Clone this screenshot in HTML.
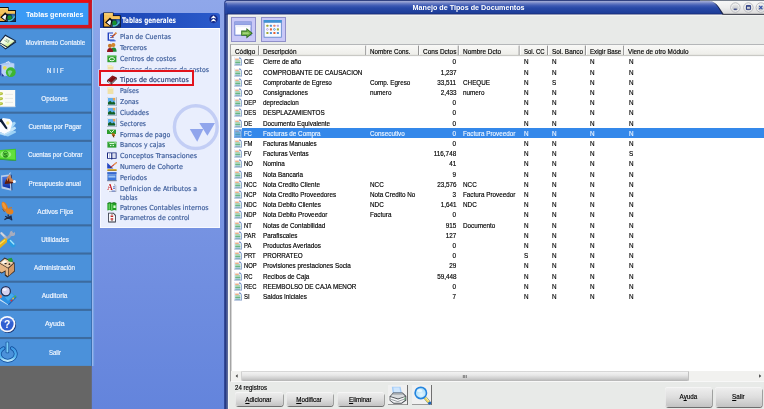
<!DOCTYPE html>
<html lang="es"><head><meta charset="utf-8"><title>Manejo de Tipos de Documentos</title>
<style>
html,body{margin:0;padding:0}
body{width:764px;height:409px;position:relative;overflow:hidden;font-family:"Liberation Sans",sans-serif;
background:linear-gradient(#8fa7ea 0%,#7d98e4 40%,#6384dc 100%)}
.a,.t,svg{position:absolute}
.t{white-space:nowrap;display:block;-webkit-text-stroke:0.18px currentColor}
.t u{text-decoration-thickness:0.6px;text-underline-offset:0.5px}
.sb{left:0;width:92px;background:#4a91da}
.sep{left:0;width:92px;height:2px;background:#3c6da3}
.btn{border-radius:3px;background:linear-gradient(#efefef,#dedede 50%,#c3c3c3);box-shadow:0.6px 1px 0.6px #6e6e6e,inset 0 0.8px 0 #f8f8f8,inset 0.8px 0 0 #ececec;}
.ib{background:#f0f0f0;box-shadow:1px 0 0 #707070,0 1px 0 #9a9a9a,1px 1px 0 #707070}
</style></head><body>

<svg style="left:0;top:0" width="96" height="409" viewBox="0 0 96 409"><rect x="0" y="0" width="91.8" height="366" fill="#4b91da"/><rect x="0" y="365.9" width="91.8" height="44" fill="#666666"/><rect x="91" y="28" width="1" height="337.9" fill="#3a72b4"/><rect x="92" y="0" width="1.4" height="366" fill="#a9c6f2" opacity="0.75"/><rect x="93.2" y="0" width="1" height="366" fill="#74aeea" opacity="0.6"/><rect x="0" y="27.12" width="91.8" height="2.1" fill="#3c6b9f"/><rect x="0" y="55.29" width="91.8" height="2.1" fill="#3c6b9f"/><rect x="0" y="83.46" width="91.8" height="2.1" fill="#3c6b9f"/><rect x="0" y="111.63" width="91.8" height="2.1" fill="#3c6b9f"/><rect x="0" y="139.80" width="91.8" height="2.1" fill="#3c6b9f"/><rect x="0" y="167.97" width="91.8" height="2.1" fill="#3c6b9f"/><rect x="0" y="196.14" width="91.8" height="2.1" fill="#3c6b9f"/><rect x="0" y="224.31" width="91.8" height="2.1" fill="#3c6b9f"/><rect x="0" y="252.48" width="91.8" height="2.1" fill="#3c6b9f"/><rect x="0" y="280.65" width="91.8" height="2.1" fill="#3c6b9f"/><rect x="0" y="308.82" width="91.8" height="2.1" fill="#3c6b9f"/><rect x="0" y="336.99" width="91.8" height="2.1" fill="#3c6b9f"/><rect x="0" y="0" width="92" height="28.1" fill="#3a9af5"/><rect x="0" y="0" width="92" height="2.7" fill="#f20a0c"/><rect x="88.4" y="0" width="3.5" height="28.1" fill="#cd1421"/><rect x="0" y="24.9" width="91.9" height="3.3" fill="#d0161f"/><rect x="0" y="1.6" width="88.4" height="1.1" fill="#e01018"/></svg>
<span class="t" style="left:23.04px;transform-origin:50% 0;top:10.25px;font-size:7.9px;line-height:9.48px;color:#ffffff;font-weight:bold;-webkit-text-stroke:0;transform:scaleX(0.904);">Tablas generales</span>
<svg style="left:0px;top:0px;filter:blur(0.35px);" width="24" height="28" viewBox="0 0 24 28"><g transform="translate(-1.6 6.7) scale(1.0)"><path d="M0 0.4 H10.3 V3.3 H17.5 V15.4 H0Z" fill="#0d0d10"/><path d="M0.9 1.3 H9.5 V4.2 H16.5 V14.4 H0.9Z" fill="#efb145"/><path d="M0.9 1.3 H9.5 V4.2 H16.5 V7.4 H0.9Z" fill="#f5c45e"/><path d="M0.9 1.3 H9.5 V2.5 H0.9Z" fill="#f9d47e"/><path d="M8.2 7.1 H16.9 V14.9 H8.2Z" fill="#132f5c"/><path d="M13 7.6 H16.5 V11.4 H14.2Z" fill="#2f6fae"/><path d="M9.6 13.9 Q13.6 15 16.1 9.6 Q15.1 13.2 9.6 13.9Z" fill="#4dbdcd" stroke="#4dbdcd" stroke-width="1.2"/><circle cx="11.2" cy="10.9" r="2.3" fill="#15902c"/><path d="M1.8 10.6 L6.8 5.6 L9.4 8.2 L7.8 15Z" fill="#0d0d10"/><path d="M3.5 10.6 L6.8 7.7 L7.9 8.9 L7 13.5Z" fill="#f6f6ff"/></g></svg>
<span class="t" style="left:22.59px;transform-origin:50% 0;top:38.71px;font-size:6.9px;line-height:8.28px;color:#f0f6ff;transform:scaleX(0.921);">Movimiento Contable</span>
<svg style="left:0px;top:28px;filter:blur(0.35px);" width="24" height="28" viewBox="0 28 24 28"><path d="M-1 44.2 L5.5 49.6 L16.3 42.3 L15.6 41.2Z" fill="#10223c"/><path d="M-0.5 44 L5.6 48.3 L14.8 42 Z" fill="#f4fbe9"/><path d="M-1.2 42.6 L5.2 34.6 L16.2 40.8 L7.6 47.9Z" fill="#10223c"/><path d="M0 42.5 L5.4 35.9 L14.8 41 L7.5 46.8Z" fill="url(#gmc)"/><defs><linearGradient id="gmc" x1="0.2" y1="0" x2="0.7" y2="1"><stop offset="0" stop-color="#ffffff"/><stop offset="0.55" stop-color="#f0fce6"/><stop offset="0.85" stop-color="#d4f08c"/><stop offset="1" stop-color="#c4ea2c"/></linearGradient></defs><path d="M4.3 40.2 L8.2 42.4 M5.6 38.8 L9.6 41 M7 40.2 L6 42 M9 40.6 L7.8 42.8" stroke="#8fae86" stroke-width="0.8" fill="none"/></svg>
<span class="t" style="left:45.61px;transform-origin:50% 0;top:66.89px;font-size:6.9px;line-height:8.28px;color:#f0f6ff;transform:scaleX(0.884);">N I I F</span>
<svg style="left:0px;top:56px;filter:blur(0.35px);" width="24" height="28" viewBox="0 56 24 28"><path d="M-1 64.5 L8 61.8 L14.4 63.4 L14.4 74 L4 76.6 L-1 75Z" fill="#a9c6f2"/><path d="M-1 64.5 L1.6 65.2 L1.6 76 L-1 75Z" fill="#3556c3"/><path d="M1.6 65.2 L13.8 63.8 L13.8 73 L1.6 76Z" fill="#bcd3f6"/><path d="M6 62.6 L9 61.6 L9.6 63.6" stroke="#d5e3fa" stroke-width="1" fill="none"/><circle cx="4.8" cy="67.8" r="1.9" fill="#eadb58"/><circle cx="10.8" cy="72.2" r="4.9" fill="#3eb62f"/><path d="M7.6 71.5 Q10 69 12.4 71.6 Q10.5 74.5 9.6 76.2 Q8 74 7.6 71.5Z" fill="#8fd3b8" opacity="0.75"/><path d="M1.6 73 L4.6 76.4 L1.6 76.2Z" fill="#23389a"/></svg>
<span class="t" style="left:40.42px;transform-origin:50% 0;top:95.05px;font-size:6.9px;line-height:8.28px;color:#f0f6ff;transform:scaleX(0.906);">Opciones</span>
<svg style="left:0px;top:84px;filter:blur(0.35px);" width="24" height="28" viewBox="0 84 24 28"><rect x="-1" y="90" width="16.2" height="17" fill="#fbfbf6"/><rect x="-1" y="106.2" width="16.4" height="1" fill="#c9d7e6"/><ellipse cx="0.6" cy="93.6" rx="2.5" ry="1.7" fill="#b3c341"/><ellipse cx="0.2" cy="93.1" rx="1.8" ry="0.8" fill="#d2dc77"/><ellipse cx="0.6" cy="98.6" rx="2.5" ry="1.7" fill="#b3c341"/><ellipse cx="0.2" cy="98.1" rx="1.8" ry="0.8" fill="#d2dc77"/><ellipse cx="0.6" cy="103.6" rx="2.5" ry="1.7" fill="#b3c341"/><ellipse cx="0.2" cy="103.1" rx="1.8" ry="0.8" fill="#d2dc77"/><path d="M5 94.4 H13" stroke="#dfe1dc" stroke-width="0.7"/><path d="M5 98.4 H13" stroke="#dfe1dc" stroke-width="0.7"/><path d="M5 102.4 H13" stroke="#dfe1dc" stroke-width="0.7"/></svg>
<span class="t" style="left:26.04px;transform-origin:50% 0;top:123.23px;font-size:6.9px;line-height:8.28px;color:#f0f6ff;transform:scaleX(0.913);">Cuentas por Pagar</span>
<svg style="left:0px;top:112px;filter:blur(0.35px);" width="24" height="28" viewBox="0 112 24 28"><path d="M3 132 L14 121.5 L16 123 L8 134.5Z" fill="#a9d9f8"/><path d="M2 132.5 L15 126.4 L16.2 128.4 L7 135.4Z" fill="#c5e6fa"/><path d="M0 133 L15.5 130.8 L16 132.6 L8 136.4 L0 134.6Z" fill="#9dd2f5"/><path d="M-1 122 L3 118 L10 119 L12.5 122.5 L10 131 L4.5 134 L-1 131.5Z" fill="#fbfdff"/><path d="M-1 131.5 L4.5 134 L10 131 L10.4 132.4 L4.5 135.4 L-1 133Z" fill="#c1e1f7"/><circle cx="7.8" cy="123" r="1.7" fill="#f6ec8c"/><path d="M-1 120 L1.4 118.6 L7 127.2 L7.4 129.4 L5.4 128.4Z" fill="#0d1e37"/></svg>
<span class="t" style="left:24.70px;transform-origin:50% 0;top:151.40px;font-size:6.9px;line-height:8.28px;color:#f0f6ff;transform:scaleX(0.903);">Cuentas por Cobrar</span>
<svg style="left:0px;top:140px;filter:blur(0.35px);" width="24" height="28" viewBox="0 140 24 28"><path d="M-1 150 L15.8 148.8 L16.1 160.4 L-1 158.8Z" fill="#3fc426"/><path d="M-1 150.9 L14.9 149.8 L15.2 159.4 L-1 158Z" fill="#62e03e"/><path d="M-1 158.8 L16.1 160.4 L16.1 161.1 L-1 159.6Z" fill="#2a9a1c"/><ellipse cx="5.8" cy="154.4" rx="5.4" ry="3.4" fill="#98f07c"/><ellipse cx="5.6" cy="154.4" rx="2.6" ry="3.2" fill="#66dc48" stroke="#23801a" stroke-width="0.7"/><text x="5.6" y="156.6" font-size="6.2" font-weight="bold" font-family="Liberation Sans, sans-serif" text-anchor="middle" fill="#1b7414">$</text></svg>
<span class="t" style="left:26.23px;transform-origin:50% 0;top:179.57px;font-size:6.9px;line-height:8.28px;color:#f0f6ff;transform:scaleX(0.914);">Presupuesto anual</span>
<svg style="left:0px;top:168px;filter:blur(0.35px);" width="24" height="28" viewBox="0 168 24 28"><path d="M1 175.4 L10.6 174.2 L11.6 190.8 L1.6 188.4Z" fill="#b9cdeb"/><path d="M10.6 174.2 L11.7 175 L12.4 190 L11.6 190.8Z" fill="#23366d"/><path d="M2.2 177 L9.4 176.2 L10.2 188.4 L2.6 186.6Z" fill="url(#gpa)"/><defs><linearGradient id="gpa" x1="0" y1="0" x2="0" y2="1"><stop offset="0" stop-color="#4a78e0"/><stop offset="1" stop-color="#0c2da0"/></linearGradient></defs><path d="M5 182.6 Q7 176.2 9.8 174.4 Q11 178.6 13.6 180.4 L13.4 182.6 L5.4 183.2Z" fill="#d08450"/><path d="M4.6 183.6 L6.4 178.8 L7.4 181.4 L9 177.4 L9.4 181.6 L13 182 L12.8 183.2 L5 184Z" fill="#5e1c0d"/><circle cx="14.4" cy="181.4" r="1.5" fill="#f3f5ff"/><path d="M9.6 174 L10.3 172.6" stroke="#dfe8f8" stroke-width="0.9"/></svg>
<span class="t" style="left:35.64px;transform-origin:50% 0;top:207.74px;font-size:6.9px;line-height:8.28px;color:#f0f6ff;transform:scaleX(0.930);">Activos Fijos</span>
<svg style="left:0px;top:196px;filter:blur(0.35px);" width="24" height="28" viewBox="0 196 24 28"><ellipse cx="4.8" cy="206.6" rx="2.6" ry="5.3" transform="rotate(-24 4.8 206.6)" fill="#df7d1d"/><ellipse cx="4.2" cy="205.8" rx="1.4" ry="3.6" transform="rotate(-24 4.2 205.8)" fill="#f09a3c"/><path d="M2.4 208.8 L4.6 212" stroke="#9a4d10" stroke-width="0.8"/><ellipse cx="9.6" cy="211.4" rx="3.9" ry="2.9" transform="rotate(18 9.6 211.4)" fill="#e4821f"/><path d="M8.8 208.2 L12 207.6" stroke="#d8731a" stroke-width="1"/><path d="M8.2 214.4 L8.2 216.4 M4.4 219.6 L11.6 215.8 M5.2 216.2 L11.8 219.8 M11 216.4 L11.8 220.4" stroke="#1c2b4c" stroke-width="1.3" fill="none"/></svg>
<span class="t" style="left:39.85px;transform-origin:50% 0;top:235.91px;font-size:6.9px;line-height:8.28px;color:#f0f6ff;transform:scaleX(0.914);">Utilidades</span>
<svg style="left:0px;top:224px;filter:blur(0.35px);" width="24" height="28" viewBox="0 224 24 28"><path d="M1.6 233.4 L7.4 239.2" stroke="#b4bccc" stroke-width="2.5" stroke-linecap="round"/><path d="M1.2 233 L4 235.8" stroke="#d3d8e4" stroke-width="1.4" stroke-linecap="round"/><path d="M12.4 232.8 L7 239" stroke="#9aa1b4" stroke-width="2.7"/><circle cx="12.4" cy="233.4" r="2.7" fill="#a6acbe"/><path d="M11.6 230.4 L13.2 233 L15.6 231.6" fill="#4a91da"/><path d="M5.4 240.6 L-1 246" stroke="#e4b01a" stroke-width="4.6" stroke-linecap="round"/><path d="M4.6 240.2 L-0.6 244.4" stroke="#fbdf5c" stroke-width="1.3" stroke-linecap="round"/><path d="M9.4 241 L13 245" stroke="#2a9ce2" stroke-width="4.8" stroke-linecap="round"/><path d="M10.4 240.4 L13.8 244" stroke="#a4e2fc" stroke-width="1.4" stroke-linecap="round"/></svg>
<span class="t" style="left:32.37px;transform-origin:50% 0;top:264.08px;font-size:6.9px;line-height:8.28px;color:#f0f6ff;transform:scaleX(0.906);">Administración</span>
<svg style="left:0px;top:252px;filter:blur(0.35px);" width="24" height="28" viewBox="0 252 24 28"><path d="M-1 262.6 L4.6 257.6 L14.6 262.4 L14.8 271.6 L7.4 277.6 L4.8 275.4 L4.8 271.8 L1.6 273.6 L-1 272Z" fill="#3a2c24"/><path d="M-0.4 262.8 L4.8 258.8 L13.6 262.8 L8 267.8Z" fill="#edcdaa"/><path d="M-0.4 263.6 L8 268.6 L8 276.2 L5.6 274.6 L5.6 270.2 L1.8 272.4 L-0.4 271.2Z" fill="#e5b687"/><path d="M8.6 268.4 L14 263.6 L14 271 L8.6 276Z" fill="#d59a66"/><path d="M1.2 262.6 L4.6 260 L7.2 261.4 L3.8 264Z" fill="#fbf6ee"/><path d="M7.6 258.8 L11.6 257.8 L13 260.4 L12 262 L8.6 261.6Z" fill="#279a3d"/><ellipse cx="5.6" cy="263.6" rx="1.3" ry="0.7" fill="#1a1a1a"/><circle cx="9.4" cy="264.2" r="0.9" fill="#3a2a22"/></svg>
<span class="t" style="left:41.38px;transform-origin:50% 0;top:292.25px;font-size:6.9px;line-height:8.28px;color:#f0f6ff;transform:scaleX(0.947);">Auditoria</span>
<svg style="left:0px;top:280px;filter:blur(0.35px);" width="24" height="28" viewBox="0 280 24 28"><path d="M-1 298.4 L10.8 292.4 L16.2 296.2 L8 304.4 Z" fill="#2b8fe2"/><path d="M-1 298.4 L8 304.4 L8.6 305.4 L-1 299.8Z" fill="#cfe6fa"/><path d="M8 304.4 L16.2 296.2 L16.4 297.4 L8.6 305.4Z" fill="#1d5fb3"/><path d="M4 296 L11 293 L14 295.6 L8 301Z" fill="#4db0f0" opacity="0.8"/><circle cx="15.2" cy="296.4" r="1" fill="#48b848"/><circle cx="13.2" cy="298.6" r="1" fill="#e8c030"/><circle cx="11.4" cy="300.6" r="1" fill="#d83838"/><circle cx="0" cy="296.4" r="1.9" fill="#ee8456"/><circle cx="5.8" cy="291.2" r="4.6" fill="#d3d1f0" stroke="#1f2f57" stroke-width="1.2"/><ellipse cx="4.6" cy="289.6" rx="2" ry="1.4" fill="#f4f3ff"/></svg>
<span class="t" style="left:45.28px;transform-origin:50% 0;top:320.42px;font-size:6.9px;line-height:8.28px;color:#f0f6ff;transform:scaleX(1.008);">Ayuda</span>
<svg style="left:0px;top:308px;filter:blur(0.35px);" width="24" height="28" viewBox="0 308 24 28"><circle cx="8" cy="325" r="8" fill="#17306e"/><circle cx="7.2" cy="324.1" r="8.2" fill="#fbfcff"/><circle cx="7.2" cy="324.1" r="6.4" fill="#3160d2"/><path d="M1.4 321.4 A6.4 6.4 0 0 1 13 321.6 Q7 323.6 1.4 321.4Z" fill="#5f88e6" opacity="0.55"/><text x="7.2" y="328" font-size="10.4" font-weight="bold" font-family="Liberation Sans, sans-serif" text-anchor="middle" fill="#ffffff">?</text></svg>
<span class="t" style="left:48.10px;transform-origin:50% 0;top:348.59px;font-size:6.9px;line-height:8.28px;color:#f0f6ff;transform:scaleX(0.869);">Salir</span>
<svg style="left:0px;top:336px;filter:blur(0.35px);" width="24" height="28" viewBox="0 336 24 28"><path d="M3.5 348.2 A8 6.8 0 1 0 11.9 348.2" fill="none" stroke="#0f4c9a" stroke-width="3.8" stroke-linecap="round"/><path d="M3.5 348.2 A8 6.8 0 1 0 11.9 348.2" fill="none" stroke="url(#gsa)" stroke-width="2.3" stroke-linecap="round"/><defs><linearGradient id="gsa" x1="0" y1="0" x2="0" y2="1"><stop offset="0" stop-color="#3f98e4"/><stop offset="0.7" stop-color="#55b6f0"/><stop offset="1" stop-color="#c4ecfc"/></linearGradient></defs><rect x="5.7" y="341.8" width="3.4" height="11.4" rx="0.8" fill="#0f4c9a"/><rect x="6.4" y="342.3" width="2" height="10.2" fill="#78ccf8"/></svg>
<div class="a" style="left:100px;top:13px;width:120px;height:15px;border-radius:3px 3px 0 0;background:linear-gradient(90deg,#1a43b2,#2b5bcb)"></div>
<div class="a" style="left:100px;top:28px;width:120px;height:200px;background:#e9eefd;box-sizing:border-box;border:1px solid #f7f9ff;border-top:1px solid #ffffff"></div>
<svg style="left:170px;top:102px;filter:blur(0.45px);" width="52" height="52" viewBox="170 102 52 52"><circle cx="195.8" cy="127.1" r="21.4" fill="none" stroke="#c3cef5" stroke-width="3.4"/><path d="M189.8 129 L203.4 129 L197.2 141.8Z" fill="#90a5ec"/><path d="M199.3 123 L215 123 L207.4 135.8Z" fill="#90a5ec"/></svg>
<svg style="left:100px;top:10px;filter:blur(0.3px);" width="124" height="20" viewBox="100 10 124 20"><g transform="translate(103.2 12.0) scale(1.0)"><path d="M0 0.4 H10.3 V3.3 H17.5 V15.4 H0Z" fill="#0d0d10"/><path d="M0.9 1.3 H9.5 V4.2 H16.5 V14.4 H0.9Z" fill="#efb145"/><path d="M0.9 1.3 H9.5 V4.2 H16.5 V7.4 H0.9Z" fill="#f5c45e"/><path d="M0.9 1.3 H9.5 V2.5 H0.9Z" fill="#f9d47e"/><path d="M8.2 7.1 H16.9 V14.9 H8.2Z" fill="#132f5c"/><path d="M13 7.6 H16.5 V11.4 H14.2Z" fill="#2f6fae"/><path d="M9.6 13.9 Q13.6 15 16.1 9.6 Q15.1 13.2 9.6 13.9Z" fill="#4dbdcd" stroke="#4dbdcd" stroke-width="1.2"/><circle cx="11.2" cy="10.9" r="2.3" fill="#15902c"/><path d="M1.8 10.6 L6.8 5.6 L9.4 8.2 L7.8 15Z" fill="#0d0d10"/><path d="M3.5 10.6 L6.8 7.7 L7.9 8.9 L7 13.5Z" fill="#f6f6ff"/></g><circle cx="213.5" cy="18.9" r="4.5" fill="#12298a" stroke="#3a62cc" stroke-width="0.6"/><path d="M211.4 18.3 L213.5 16.3 L215.6 18.3 M211.4 21.3 L213.5 19.3 L215.6 21.3" stroke="#fff" stroke-width="1.1" fill="none"/></svg>
<span class="t" style="left:121.60px;transform-origin:0 0;top:16.46px;font-size:7.9px;line-height:9.48px;color:#ffffff;font-weight:bold;-webkit-text-stroke:0;transform:scaleX(0.803);font-family:'DejaVu Sans Condensed','DejaVu Sans',sans-serif;">Tablas generales</span>
<span class="t" style="left:120.10px;transform-origin:0 0;top:33.42px;font-size:6.8px;line-height:8.16px;color:#3f5f9c;transform:scaleX(1.027);font-family:'DejaVu Sans Condensed','DejaVu Sans',sans-serif;">Plan de Cuentas</span>
<svg style="left:106px;top:30.1px;filter:blur(0.3px);" width="13" height="13" viewBox="106 30.1 13 13"><path transform="translate(107 32.10)" d="M0.6 0.4 H6 V1.4 H2 V7.6 H7.4 V8.8 H0.6Z" fill="#2140bd" /><path transform="translate(107 32.10)" d="M3 3.2 H6.4 V4 H3Z M3 5.2 H6.8 V6 H3Z" fill="#3050c8" /><path transform="translate(107 32.10)" d="M8.8 0.2 L9.8 1.2 L5.6 5.6 L4.2 6 L4.6 4.6Z" fill="#b84a28" /><path transform="translate(107 32.10)" d="M8.8 0.2 L9.8 1.2 L8.8 2.2 L7.8 1.2Z" fill="#e8a040" /><path transform="translate(107 32.10)" d="M3 8.2 H8.6 V9.4 H3Z" fill="#3f63d8" /></svg>
<span class="t" style="left:120.10px;transform-origin:0 0;top:44.02px;font-size:6.8px;line-height:8.16px;color:#3f5f9c;transform:scaleX(1.074);font-family:'DejaVu Sans Condensed','DejaVu Sans',sans-serif;">Terceros</span>
<svg style="left:106px;top:40.7px;filter:blur(0.3px);" width="13" height="13" viewBox="106 40.7 13 13"><path transform="translate(107 42.70)" d="M5.6 0 A2 2 0 1 1 5.5 4 Z" fill="#d88a30" /><circle cx="113.4" cy="44.699999999999996" r="2" fill="#d4862c"/><path transform="translate(107 42.70)" d="M3.6 8.8 Q3.8 4.4 6.6 4.4 Q9.6 4.4 9.6 8.8Z" fill="#1f8a36" /><circle cx="110" cy="45.49999999999999" r="2.1" fill="#c8782a"/><path transform="translate(107 42.70)" d="M0 9 Q0.2 5 3 5 Q6 5 6 9Z" fill="#93131f" /></svg>
<span class="t" style="left:120.10px;transform-origin:0 0;top:54.82px;font-size:6.8px;line-height:8.16px;color:#3f5f9c;transform:scaleX(1.023);font-family:'DejaVu Sans Condensed','DejaVu Sans',sans-serif;">Centros de costos</span>
<svg style="left:106px;top:51.5px;filter:blur(0.3px);" width="13" height="13" viewBox="106 51.5 13 13"><path transform="translate(107 53.50)" d="M0.4 1.6 H9.4 V8.2 H0.4Z" fill="#2f9f30" /><path transform="translate(107 53.50)" d="M0.4 1.6 H9.4 V2.8 H0.4Z" fill="#56bd52" /><ellipse cx="111.9" cy="58.7" rx="2.6" ry="1.6" fill="none" stroke="#f0fff0" stroke-width="1"/></svg>
<span class="t" style="left:120.10px;transform-origin:0 0;top:65.62px;font-size:6.8px;line-height:8.16px;color:#3f5f9c;transform:scaleX(1.019);font-family:'DejaVu Sans Condensed','DejaVu Sans',sans-serif;">Grupos de centros de costos</span>
<svg style="left:106px;top:62.3px;filter:blur(0.3px);" width="13" height="13" viewBox="106 62.3 13 13"><path transform="translate(107 64.30)" d="M0.6 1 H4.4 L5.2 2 H6.4 V8 H0.6Z" fill="#efdf9f" opacity="0.9"/><path transform="translate(107 64.30)" d="M0.6 1 H4.4 L5.2 2 H6.4 V3 H0.6Z" fill="#f6ecc0" /></svg>
<span class="t" style="left:120.10px;transform-origin:0 0;top:87.32px;font-size:6.8px;line-height:8.16px;color:#3f5f9c;transform:scaleX(0.991);font-family:'DejaVu Sans Condensed','DejaVu Sans',sans-serif;">Países</span>
<svg style="left:106px;top:84.0px;filter:blur(0.3px);" width="13" height="13" viewBox="106 84.0 13 13"><path transform="translate(107 86.00)" d="M0.6 1 H4.4 L5.2 2 H6.4 V8 H0.6Z" fill="#efdf9f" opacity="0.9"/><path transform="translate(107 86.00)" d="M0.6 1 H4.4 L5.2 2 H6.4 V3 H0.6Z" fill="#f6ecc0" /></svg>
<span class="t" style="left:120.10px;transform-origin:0 0;top:97.92px;font-size:6.8px;line-height:8.16px;color:#3f5f9c;transform:scaleX(1.003);font-family:'DejaVu Sans Condensed','DejaVu Sans',sans-serif;">Zonas</span>
<svg style="left:106px;top:94.6px;filter:blur(0.3px);" width="13" height="13" viewBox="106 94.6 13 13"><path transform="translate(107 96.60)" d="M0.2 0.2 H9.6 V9 H0.2Z" fill="#8a96a8" /><path transform="translate(107 96.60)" d="M0.2 0.2 H9 V8.4 H0.2Z" fill="#f4f6f8" /><path transform="translate(107 96.60)" d="M1 1 H8.2 V7.6 H1Z" fill="#5fb0f0" /><path transform="translate(107 96.60)" d="M5.6 1 H8.2 V3.6 H6.4Z" fill="#e8a050" /><path transform="translate(107 96.60)" d="M1 5.6 L3.2 3.8 L5 5.4 L6.6 4.4 L8.2 6 V7.6 H1Z" fill="#145f24" /></svg>
<span class="t" style="left:120.10px;transform-origin:0 0;top:108.72px;font-size:6.8px;line-height:8.16px;color:#3f5f9c;transform:scaleX(1.024);font-family:'DejaVu Sans Condensed','DejaVu Sans',sans-serif;">Ciudades</span>
<svg style="left:106px;top:105.4px;filter:blur(0.3px);" width="13" height="13" viewBox="106 105.4 13 13"><path transform="translate(107 107.40)" d="M0.2 0.2 H9.6 V9 H0.2Z" fill="#8a96a8" /><path transform="translate(107 107.40)" d="M0.2 0.2 H9 V8.4 H0.2Z" fill="#f4f6f8" /><path transform="translate(107 107.40)" d="M1 1 H8.2 V7.6 H1Z" fill="#5fb0f0" /><path transform="translate(107 107.40)" d="M5.6 1 H8.2 V3.6 H6.4Z" fill="#e8a050" /><path transform="translate(107 107.40)" d="M1 5.6 L3.2 3.8 L5 5.4 L6.6 4.4 L8.2 6 V7.6 H1Z" fill="#145f24" /></svg>
<span class="t" style="left:120.10px;transform-origin:0 0;top:119.62px;font-size:6.8px;line-height:8.16px;color:#3f5f9c;transform:scaleX(0.982);font-family:'DejaVu Sans Condensed','DejaVu Sans',sans-serif;">Sectores</span>
<svg style="left:106px;top:116.3px;filter:blur(0.3px);" width="13" height="13" viewBox="106 116.3 13 13"><path transform="translate(107 118.30)" d="M0.2 0.2 H9.6 V9 H0.2Z" fill="#8a96a8" /><path transform="translate(107 118.30)" d="M0.2 0.2 H9 V8.4 H0.2Z" fill="#f4f6f8" /><path transform="translate(107 118.30)" d="M1 1 H8.2 V7.6 H1Z" fill="#5fb0f0" /><path transform="translate(107 118.30)" d="M5.6 1 H8.2 V3.6 H6.4Z" fill="#e8a050" /><path transform="translate(107 118.30)" d="M1 5.6 L3.2 3.8 L5 5.4 L6.6 4.4 L8.2 6 V7.6 H1Z" fill="#145f24" /></svg>
<span class="t" style="left:120.10px;transform-origin:0 0;top:130.52px;font-size:6.8px;line-height:8.16px;color:#3f5f9c;transform:scaleX(1.028);font-family:'DejaVu Sans Condensed','DejaVu Sans',sans-serif;">Formas de pago</span>
<svg style="left:106px;top:127.19999999999999px;filter:blur(0.3px);" width="13" height="13" viewBox="106 127.19999999999999 13 13"><path transform="translate(107 129.20)" d="M0 0.6 H9 V5 H0Z" fill="#2e9d2e" /><path transform="translate(107 129.20)" d="M2.4 1.4 L4.4 3.6 L6.8 1.2" fill="none" stroke="#e6ffe0" stroke-width="1"/><path transform="translate(107 129.20)" d="M4.4 4.6 L7.2 4 L8.2 6.4 L6.4 8.2 L5.2 6.6Z" fill="#b8681c" /><path transform="translate(107 129.20)" d="M6 6 L6.8 8.4" fill="none" stroke="#5a2a08" stroke-width="0.9"/></svg>
<span class="t" style="left:120.10px;transform-origin:0 0;top:141.32px;font-size:6.8px;line-height:8.16px;color:#3f5f9c;transform:scaleX(0.996);font-family:'DejaVu Sans Condensed','DejaVu Sans',sans-serif;">Bancos y cajas</span>
<svg style="left:106px;top:138.0px;filter:blur(0.3px);" width="13" height="13" viewBox="106 138.0 13 13"><path transform="translate(107 140.00)" d="M0.4 1.8 H9.4 V7.6 H0.4Z" fill="#2fa032" /><path transform="translate(107 140.00)" d="M0.4 1.8 H9.4 V2.8 H0.4Z" fill="#5cc05a" /><path transform="translate(107 140.00)" d="M2.4 3.6 H7.4 M3 5.6 H4.4 M5.6 5.6 H7" fill="none" stroke="#eaffea" stroke-width="1"/><path transform="translate(107 140.00)" d="M7.6 2.4 L9 3.4" fill="none" stroke="#eaffea" stroke-width="0.8"/></svg>
<span class="t" style="left:120.10px;transform-origin:0 0;top:152.12px;font-size:6.8px;line-height:8.16px;color:#3f5f9c;transform:scaleX(1.046);font-family:'DejaVu Sans Condensed','DejaVu Sans',sans-serif;">Conceptos Transaciones</span>
<svg style="left:106px;top:148.8px;filter:blur(0.3px);" width="13" height="13" viewBox="106 148.8 13 13"><path transform="translate(107 150.80)" d="M0 1.4 H9.6 V7.8 H5.6 L4.8 8.8 L4 7.8 H0Z" fill="#17277e" /><path transform="translate(107 150.80)" d="M1 2.2 H4.2 V7 H1Z M5.4 2.2 H8.6 V7 H5.4Z" fill="#ffffff" /><path transform="translate(107 150.80)" d="M2.6 2.2 V7 M7 2.2 V7" fill="none" stroke="#8090c8" stroke-width="0.6"/></svg>
<span class="t" style="left:120.10px;transform-origin:0 0;top:162.82px;font-size:6.8px;line-height:8.16px;color:#3f5f9c;transform:scaleX(1.048);font-family:'DejaVu Sans Condensed','DejaVu Sans',sans-serif;">Numero de Cohorte</span>
<svg style="left:106px;top:159.5px;filter:blur(0.3px);" width="13" height="13" viewBox="106 159.5 13 13"><path transform="translate(107 161.50)" d="M0.2 0.8 L0.2 6.4 L6.4 6.4Z" fill="#2648c0" /><path transform="translate(107 161.50)" d="M9.4 0 L10 0.8 L4.4 5.6 L3.2 6 L3.6 4.8Z" fill="#c83828" /><path transform="translate(107 161.50)" d="M6.8 2.2 L7.6 3 L9.8 1 L9.2 0.2Z" fill="#f0a848" /><path transform="translate(107 161.50)" d="M3.2 6 L3.6 4.8 L4.4 5.6Z" fill="#202020" /><path transform="translate(107 161.50)" d="M0.4 7 H9.6 V8.8 H0.4Z" fill="#d9b233" /><path transform="translate(107 161.50)" d="M0.4 8.4 H9.6 V9 H0.4Z" fill="#8a6a18" /></svg>
<span class="t" style="left:120.10px;transform-origin:0 0;top:173.72px;font-size:6.8px;line-height:8.16px;color:#3f5f9c;transform:scaleX(1.039);font-family:'DejaVu Sans Condensed','DejaVu Sans',sans-serif;">Periodos</span>
<svg style="left:106px;top:170.4px;filter:blur(0.3px);" width="13" height="13" viewBox="106 170.4 13 13"><path transform="translate(107 172.40)" d="M0.2 0 H9.6 V9 H0.2Z" fill="#8ea8d8" /><path transform="translate(107 172.40)" d="M0.4 0.2 H9.4 V2 H0.4Z" fill="#3568d0" /><path transform="translate(107 172.40)" d="M0.8 2.6 H9 V8.2 H0.8Z" fill="#3d78dc" /><path transform="translate(107 172.40)" d="M1.4 3.6 H8.4 V5.6 H1.4Z" fill="#9cc4f4" /><path transform="translate(107 172.40)" d="M0.2 8.2 H9.6 V9.2 H0.2Z" fill="#6a7a98" /></svg>
<span class="t" style="left:120.10px;transform-origin:0 0;top:184.72px;font-size:6.8px;line-height:8.16px;color:#3f5f9c;transform:scaleX(1.019);font-family:'DejaVu Sans Condensed','DejaVu Sans',sans-serif;">Definicion de Atributos a</span>
<svg style="left:106px;top:181.4px;filter:blur(0.3px);" width="13" height="13" viewBox="106 181.4 13 13"><path transform="translate(107 183.40)" d="M1 0.4 H7 L9 2.4 V8.8 H1Z" fill="#f6f7fb" /><path transform="translate(107 183.40)" d="M7 0.4 L9 2.4 H7Z" fill="#a8b0c0" /><path transform="translate(107 183.40)" d="M8.6 2.4 H9.2 V9 H2 V8.6 H8.6Z" fill="#8088a0" /><text x="107.2" y="190.4" font-size="7.6" font-weight="bold" font-family="Liberation Serif, serif" fill="#c01820">A</text><path transform="translate(107 183.40)" d="M6 3.8 H8 M6 5.4 H8 M4.6 8 H8" fill="none" stroke="#3858c0" stroke-width="0.8"/></svg>
<span class="t" style="left:120.10px;transform-origin:0 0;top:194.02px;font-size:6.8px;line-height:8.16px;color:#3f5f9c;transform:scaleX(0.943);font-family:'DejaVu Sans Condensed','DejaVu Sans',sans-serif;">tablas</span>
<span class="t" style="left:120.10px;transform-origin:0 0;top:203.72px;font-size:6.8px;line-height:8.16px;color:#3f5f9c;transform:scaleX(1.032);font-family:'DejaVu Sans Condensed','DejaVu Sans',sans-serif;">Patrones Contables internos</span>
<svg style="left:106px;top:200.4px;filter:blur(0.3px);" width="13" height="13" viewBox="106 200.4 13 13"><path transform="translate(107 202.40)" d="M0.4 1.4 Q2.6 -0.2 4.8 1.2 Q7 -0.2 9.4 1.4 V8.4 Q7 7.4 4.8 8.8 Q2.6 7.4 0.4 8.4Z" fill="#1f9f21" /><path transform="translate(107 202.40)" d="M2.2 1.6 V7.6 M4.8 1.6 V8.2" fill="none" stroke="#8ee88a" stroke-width="0.9"/><path transform="translate(107 202.40)" d="M6.4 3.4 H8.6 V6 H6.4Z" fill="#d8ffd4" /><path transform="translate(107 202.40)" d="M0.4 1.4 Q2.6 -0.2 4.8 1.2 Q7 -0.2 9.4 1.4" fill="none" stroke="#0d5f12" stroke-width="0.7"/></svg>
<span class="t" style="left:120.10px;transform-origin:0 0;top:214.42px;font-size:6.8px;line-height:8.16px;color:#3f5f9c;transform:scaleX(1.031);font-family:'DejaVu Sans Condensed','DejaVu Sans',sans-serif;">Parametros de control</span>
<svg style="left:106px;top:211.1px;filter:blur(0.3px);" width="13" height="13" viewBox="106 211.1 13 13"><path transform="translate(107 213.10)" d="M1.2 -0.2 H6.6 L8.8 2 V9.4 H1.2Z" fill="#2a2e3c" /><path transform="translate(107 213.10)" d="M2 0.6 H6.2 L8 2.4 V8.6 H2Z" fill="#f8f8fb" /><path transform="translate(107 213.10)" d="M3.6 2.6 H6.2 V4 H3.6Z M3.6 5.2 H6.2 V6.8 H3.6Z" fill="#c02a2a" /><path transform="translate(107 213.10)" d="M4.4 1.2 H5.6 M4.4 7.6 H5.6" fill="none" stroke="#5a1a1a" stroke-width="0.8"/></svg>
<div class="a" style="left:99px;top:69.9px;width:91px;height:12.5px;border:2.4px solid #e2131c;background:#eef2ff;box-shadow:0 0 0 0.6px rgba(233,238,253,0.9)"></div>
<span class="t" style="left:120.10px;transform-origin:0 0;top:76.42px;font-size:6.8px;line-height:8.16px;color:#2b3f78;transform:scaleX(1.052);font-family:'DejaVu Sans Condensed','DejaVu Sans',sans-serif;">Tipos de documentos</span>
<svg style="left:106px;top:73.1px;filter:blur(0.3px);" width="13" height="13" viewBox="106 73.1 13 13"><path transform="translate(107 75.10)" d="M0 5.2 L5.4 0.4 L9.8 2.6 L4.6 7.6Z" fill="#7f0f12" /><path transform="translate(107 75.10)" d="M0 5.2 L4.6 7.6 L4.6 9.4 L0 6.8Z" fill="#1a0a0a" /><path transform="translate(107 75.10)" d="M0.8 6 L4.2 7.9 L4.2 8.8 L0.8 6.9Z" fill="#ffffff" /><path transform="translate(107 75.10)" d="M4.6 7.6 L9.8 2.6 L9.8 4.2 L4.6 9.4Z" fill="#2a0c0c" /><path transform="translate(107 75.10)" d="M5 8 L9.4 3.7 L9.4 4.3 L5 8.7Z" fill="#f0f0f0" /><path transform="translate(107 75.10)" d="M1.6 5 L5.4 1.6 L7 2.4" fill="none" stroke="#a83038" stroke-width="0.6"/></svg>
<div class="a" style="left:227px;top:4px;width:537px;height:405px;background:#e8eae8"></div>
<svg style="left:222px;top:0" width="542" height="409" viewBox="222 0 542 409"><defs><linearGradient id="gtb" x1="0" y1="0" x2="0" y2="14.6" gradientUnits="userSpaceOnUse"><stop offset="0" stop-color="#4a5268"/><stop offset="0.06" stop-color="#59627e"/><stop offset="0.1" stop-color="#9aa5d3"/><stop offset="0.17" stop-color="#8493cd"/><stop offset="0.26" stop-color="#6076c0"/><stop offset="0.4" stop-color="#3b58b2"/><stop offset="0.55" stop-color="#2849a7"/><stop offset="0.92" stop-color="#1c3c98"/><stop offset="0.94" stop-color="#131f58"/><stop offset="1" stop-color="#131f58"/></linearGradient></defs><path d="M224.2 409 V3 Q224.2 0 227.2 0 H764 V14.6 H227.9 V409Z" fill="#263a86"/><path d="M225.2 14.6 V3.4 Q225.2 0.8 227.8 0.8 H764 V14.6Z" fill="url(#gtb)"/><rect x="226.1" y="14.6" width="1.8" height="395" fill="#4b5b93"/><rect x="225.3" y="3" width="1.6" height="11.6" fill="#2a49a2" opacity="0.7"/><rect x="227.9" y="14.6" width="536.1" height="1.1" fill="#f8f8f8"/><rect x="227.9" y="15.7" width="1.2" height="394" fill="#f4f5f4"/></svg>
<svg style="left:700px;top:0px;filter:blur(0.3px);" width="64" height="16" viewBox="700 0 64 16"><defs><linearGradient id="gtr" x1="0" y1="0" x2="0" y2="1"><stop offset="0" stop-color="#f7f7f7"/><stop offset="0.5" stop-color="#eeeeee"/><stop offset="1" stop-color="#d9d9d9"/></linearGradient><linearGradient id="gcb" x1="0" y1="0" x2="0" y2="1"><stop offset="0" stop-color="#e9e9e9"/><stop offset="1" stop-color="#bcbec3"/></linearGradient></defs><path d="M707.4 0 C716 1 718.5 8.5 722.4 14.6 L764 14.6 L764 0Z" fill="#1a254c"/><path d="M709.4 1 C717.2 2 719.6 8.4 723.6 13.9 L764 13.9 L764 1Z" fill="url(#gtr)"/><rect x="722.6" y="13.8" width="42" height="0.9" fill="#4c4c4c"/><rect x="700" y="0" width="64" height="1" fill="#777f8c"/><circle cx="735.4" cy="7.5" r="4.7" fill="#f7f7f7" stroke="#a9abb0" stroke-width="0.8"/><circle cx="735.4" cy="7.5" r="3.3" fill="url(#gcb)"/><circle cx="748.4" cy="7.5" r="4.7" fill="#f7f7f7" stroke="#a9abb0" stroke-width="0.8"/><circle cx="748.4" cy="7.5" r="3.3" fill="url(#gcb)"/><circle cx="760.8" cy="7.5" r="4.7" fill="#f7f7f7" stroke="#a9abb0" stroke-width="0.8"/><circle cx="760.8" cy="7.5" r="3.3" fill="url(#gcb)"/><path d="M733.8 9.2 H736.8" stroke="#1f2f78" stroke-width="1.1"/><rect x="746.5" y="5.8" width="3.9" height="3.5" fill="none" stroke="#24357f" stroke-width="0.9"/><path d="M746.5 6 H750.4" stroke="#24357f" stroke-width="1.2"/><path d="M759.2 5.9 L762.4 9.1 M762.4 5.9 L759.2 9.1" stroke="#2a4aa8" stroke-width="1.1"/></svg>
<span class="t" style="left:413.92px;transform-origin:50% 0;top:4.30px;font-size:7.0px;line-height:8.40px;color:#ffffff;font-weight:bold;-webkit-text-stroke:0;transform:scaleX(1.026);">Manejo de Tipos de Documentos</span>
<div class="a" style="left:231px;top:17.2px;width:25.4px;height:24.4px;background:#c9c8f7;border:0.8px solid #8f8fc9;box-sizing:border-box"></div>
<div class="a" style="left:260.6px;top:17.2px;width:25.4px;height:24.4px;background:#c9c8f7;border:0.8px solid #8f8fc9;box-sizing:border-box"></div>
<svg style="left:230px;top:16px;filter:blur(0.3px);" width="58" height="27" viewBox="230 16 58 27"><rect x="234.1" y="21.3" width="17.8" height="14.6" rx="0.8" fill="#8a98dc"/><rect x="235" y="22" width="16" height="2.4" fill="#98a6e6"/><rect x="235.4" y="25.2" width="15" height="9.4" fill="#ffffff"/><rect x="235.4" y="25.2" width="15" height="2" fill="#eef0fb"/><path d="M241.2 30.6 H246.4 V28 L252.8 33.2 L246.4 38.4 V35.8 H241.2Z" fill="#2f6a22"/><path d="M242 31.4 H247.2 V29.8 L251.4 33.2 L247.2 36.6 V35 H242Z" fill="#74b548"/><path d="M242.8 32.6 H248 L249.4 33.2 L248 33.8 H242.8Z" fill="#b4dd8e"/><rect x="263.7" y="20" width="18" height="17.6" fill="#5a86c8"/><rect x="263.7" y="20" width="18" height="2.6" fill="#3f93d4"/><rect x="264.5" y="22.8" width="16.4" height="14" fill="#f8fbff"/><rect x="266.34999999999997" y="24.75" width="2.1" height="2.1" rx="0.5" fill="#a1a932"/><rect x="269.84999999999997" y="24.75" width="2.1" height="2.1" rx="0.5" fill="#4a90d2"/><rect x="273.34999999999997" y="24.75" width="2.1" height="2.1" rx="0.5" fill="#e8826a"/><rect x="276.84999999999997" y="24.75" width="2.1" height="2.1" rx="0.5" fill="#b3a4e4"/><circle cx="267.4" cy="29.4" r="0.9" fill="#fff" stroke="#a898e0" stroke-width="0.8"/><rect x="269.84999999999997" y="28.349999999999998" width="2.1" height="2.1" rx="0.5" fill="#e6602e"/><circle cx="274.4" cy="29.4" r="0.9" fill="#fff" stroke="#3f90d2" stroke-width="0.8"/><rect x="276.84999999999997" y="28.349999999999998" width="2.1" height="2.1" rx="0.5" fill="#a1a932"/><rect x="266.34999999999997" y="31.95" width="2.1" height="2.1" rx="0.5" fill="#a1a932"/><rect x="269.84999999999997" y="31.95" width="2.1" height="2.1" rx="0.5" fill="#4a90d2"/><rect x="273.34999999999997" y="31.95" width="2.1" height="2.1" rx="0.5" fill="#e6602e"/><rect x="276.84999999999997" y="31.95" width="2.1" height="2.1" rx="0.5" fill="#4a90d2"/></svg>
<div class="a" style="left:229.5px;top:44px;width:534.5px;height:337.8px;background:#ffffff;border-left:1px solid #a4a4a4;border-top:1px solid #b4b6b8;border-bottom:1px solid #f8f8f8;box-sizing:border-box"></div>
<div class="a" style="left:230.5px;top:45px;width:1px;height:336px;background:#d4d4d4"></div>
<div class="a" style="left:231px;top:45px;width:533px;height:10.8px;background:linear-gradient(#f8f8f6,#efefeb 80%,#d9d9d4)"></div>
<span class="t" style="left:234.60px;transform-origin:0 0;top:47.96px;font-size:7.4px;line-height:8.88px;color:#000;transform:scaleX(0.861);">Código</span>
<span class="t" style="left:263.30px;transform-origin:0 0;top:47.96px;font-size:7.4px;line-height:8.88px;color:#000;transform:scaleX(0.867);">Descripción</span>
<span class="t" style="left:369.80px;transform-origin:0 0;top:47.96px;font-size:7.4px;line-height:8.88px;color:#000;transform:scaleX(0.847);">Nombre Cons.</span>
<span class="t" style="left:422.80px;transform-origin:0 0;top:47.96px;font-size:7.4px;line-height:8.88px;color:#000;transform:scaleX(0.876);">Cons Dctos</span>
<span class="t" style="left:462.90px;transform-origin:0 0;top:47.96px;font-size:7.4px;line-height:8.88px;color:#000;transform:scaleX(0.874);">Nombre Dcto</span>
<span class="t" style="left:523.50px;transform-origin:0 0;top:47.96px;font-size:7.4px;line-height:8.88px;color:#000;transform:scaleX(0.812);">Sol. CC</span>
<span class="t" style="left:551.70px;transform-origin:0 0;top:47.96px;font-size:7.4px;line-height:8.88px;color:#000;transform:scaleX(0.869);">Sol. Banco</span>
<span class="t" style="left:589.90px;transform-origin:0 0;top:47.96px;font-size:7.4px;line-height:8.88px;color:#000;transform:scaleX(0.836);">Exigir Base</span>
<span class="t" style="left:628.30px;transform-origin:0 0;top:47.96px;font-size:7.4px;line-height:8.88px;color:#000;transform:scaleX(0.863);">Viene de otro Módulo</span>
<svg style="left:230px;top:44px" width="534" height="14" viewBox="230 44 534 14"><rect x="258.05" y="45.6" width="1.1" height="9.6" fill="#8f8f8f"/><rect x="259.15" y="45.6" width="1" height="9.6" fill="#ffffff"/><rect x="365.25" y="45.6" width="1.1" height="9.6" fill="#8f8f8f"/><rect x="366.35" y="45.6" width="1" height="9.6" fill="#ffffff"/><rect x="418.05" y="45.6" width="1.1" height="9.6" fill="#8f8f8f"/><rect x="419.15" y="45.6" width="1" height="9.6" fill="#ffffff"/><rect x="457.75" y="45.6" width="1.1" height="9.6" fill="#8f8f8f"/><rect x="458.85" y="45.6" width="1" height="9.6" fill="#ffffff"/><rect x="518.65" y="45.6" width="1.1" height="9.6" fill="#8f8f8f"/><rect x="519.75" y="45.6" width="1" height="9.6" fill="#ffffff"/><rect x="547.05" y="45.6" width="1.1" height="9.6" fill="#8f8f8f"/><rect x="548.15" y="45.6" width="1" height="9.6" fill="#ffffff"/><rect x="584.85" y="45.6" width="1.1" height="9.6" fill="#8f8f8f"/><rect x="585.95" y="45.6" width="1" height="9.6" fill="#ffffff"/><rect x="623.15" y="45.6" width="1.1" height="9.6" fill="#8f8f8f"/><rect x="624.25" y="45.6" width="1" height="9.6" fill="#ffffff"/><rect x="231" y="55.2" width="533" height="0.9" fill="#c4c4c0"/></svg>
<svg style="left:232.6px;top:56.4px;filter:blur(0.25px);" width="11" height="11" viewBox="232.6 56.4 11 11"><g transform="translate(233.6 57.40)"><path d="M0.2 0 H5.6 L8 2.4 V8.6 H0.2Z" fill="#7f98c6"/><path d="M0.2 0 H5.4 L7.2 1.8 V7.8 H0.2Z" fill="#fbfcff"/><path d="M5.4 0 L7.6 2.2 H5.4Z" fill="#5e7fbe"/><path d="M1.2 2.2 H4.8" stroke="#e2813e" stroke-width="0.9"/><path d="M1.2 4 H6.4 M1.2 5.6 H6.4" stroke="#45a662" stroke-width="0.9"/><path d="M1.2 7.1 H6.4" stroke="#3c8c9c" stroke-width="0.9"/></g></svg>
<span class="t" style="left:243.70px;transform-origin:0 0;top:58.36px;font-size:7.4px;line-height:8.88px;color:#000000;transform:scaleX(0.800);">CIE</span>
<span class="t" style="left:263.30px;transform-origin:0 0;top:58.36px;font-size:7.4px;line-height:8.88px;color:#000000;transform:scaleX(0.855);">Cierre de año</span>
<span class="t" style="left:452.18px;transform-origin:100% 0;top:58.36px;font-size:7.4px;line-height:8.88px;color:#000000;transform:scaleX(0.855);">0</span>
<span class="t" style="left:523.50px;transform-origin:0 0;top:58.36px;font-size:7.4px;line-height:8.88px;color:#000000;transform:scaleX(0.855);">N</span>
<span class="t" style="left:551.80px;transform-origin:0 0;top:58.36px;font-size:7.4px;line-height:8.88px;color:#000000;transform:scaleX(0.855);">N</span>
<span class="t" style="left:590.20px;transform-origin:0 0;top:58.36px;font-size:7.4px;line-height:8.88px;color:#000000;transform:scaleX(0.855);">N</span>
<span class="t" style="left:628.70px;transform-origin:0 0;top:58.36px;font-size:7.4px;line-height:8.88px;color:#000000;transform:scaleX(0.855);">N</span>
<svg style="left:232.6px;top:66.6px;filter:blur(0.25px);" width="11" height="11" viewBox="232.6 66.6 11 11"><g transform="translate(233.6 67.60)"><path d="M0.2 0 H5.6 L8 2.4 V8.6 H0.2Z" fill="#7f98c6"/><path d="M0.2 0 H5.4 L7.2 1.8 V7.8 H0.2Z" fill="#fbfcff"/><path d="M5.4 0 L7.6 2.2 H5.4Z" fill="#5e7fbe"/><path d="M1.2 2.2 H4.8" stroke="#e2813e" stroke-width="0.9"/><path d="M1.2 4 H6.4 M1.2 5.6 H6.4" stroke="#45a662" stroke-width="0.9"/><path d="M1.2 7.1 H6.4" stroke="#3c8c9c" stroke-width="0.9"/></g></svg>
<span class="t" style="left:243.70px;transform-origin:0 0;top:68.56px;font-size:7.4px;line-height:8.88px;color:#000000;transform:scaleX(0.800);">CC</span>
<span class="t" style="left:263.30px;transform-origin:0 0;top:68.56px;font-size:7.4px;line-height:8.88px;color:#000000;transform:scaleX(0.855);">COMPROBANTE DE CAUSACION</span>
<span class="t" style="left:437.78px;transform-origin:100% 0;top:68.56px;font-size:7.4px;line-height:8.88px;color:#000000;transform:scaleX(0.855);">1,237</span>
<span class="t" style="left:523.50px;transform-origin:0 0;top:68.56px;font-size:7.4px;line-height:8.88px;color:#000000;transform:scaleX(0.855);">N</span>
<span class="t" style="left:551.80px;transform-origin:0 0;top:68.56px;font-size:7.4px;line-height:8.88px;color:#000000;transform:scaleX(0.855);">N</span>
<span class="t" style="left:590.20px;transform-origin:0 0;top:68.56px;font-size:7.4px;line-height:8.88px;color:#000000;transform:scaleX(0.855);">N</span>
<span class="t" style="left:628.70px;transform-origin:0 0;top:68.56px;font-size:7.4px;line-height:8.88px;color:#000000;transform:scaleX(0.855);">N</span>
<svg style="left:232.6px;top:76.8px;filter:blur(0.25px);" width="11" height="11" viewBox="232.6 76.8 11 11"><g transform="translate(233.6 77.80)"><path d="M0.2 0 H5.6 L8 2.4 V8.6 H0.2Z" fill="#7f98c6"/><path d="M0.2 0 H5.4 L7.2 1.8 V7.8 H0.2Z" fill="#fbfcff"/><path d="M5.4 0 L7.6 2.2 H5.4Z" fill="#5e7fbe"/><path d="M1.2 2.2 H4.8" stroke="#e2813e" stroke-width="0.9"/><path d="M1.2 4 H6.4 M1.2 5.6 H6.4" stroke="#45a662" stroke-width="0.9"/><path d="M1.2 7.1 H6.4" stroke="#3c8c9c" stroke-width="0.9"/></g></svg>
<span class="t" style="left:243.70px;transform-origin:0 0;top:78.76px;font-size:7.4px;line-height:8.88px;color:#000000;transform:scaleX(0.800);">CE</span>
<span class="t" style="left:263.30px;transform-origin:0 0;top:78.76px;font-size:7.4px;line-height:8.88px;color:#000000;transform:scaleX(0.855);">Comprobante de Egreso</span>
<span class="t" style="left:369.50px;transform-origin:0 0;top:78.76px;font-size:7.4px;line-height:8.88px;color:#000000;transform:scaleX(0.855);">Comp. Egreso</span>
<span class="t" style="left:434.22px;transform-origin:100% 0;top:78.76px;font-size:7.4px;line-height:8.88px;color:#000000;transform:scaleX(0.855);">33,511</span>
<span class="t" style="left:463.00px;transform-origin:0 0;top:78.76px;font-size:7.4px;line-height:8.88px;color:#000000;transform:scaleX(0.855);">CHEQUE</span>
<span class="t" style="left:523.50px;transform-origin:0 0;top:78.76px;font-size:7.4px;line-height:8.88px;color:#000000;transform:scaleX(0.855);">N</span>
<span class="t" style="left:551.80px;transform-origin:0 0;top:78.76px;font-size:7.4px;line-height:8.88px;color:#000000;transform:scaleX(0.855);">S</span>
<span class="t" style="left:590.20px;transform-origin:0 0;top:78.76px;font-size:7.4px;line-height:8.88px;color:#000000;transform:scaleX(0.855);">N</span>
<span class="t" style="left:628.70px;transform-origin:0 0;top:78.76px;font-size:7.4px;line-height:8.88px;color:#000000;transform:scaleX(0.855);">N</span>
<svg style="left:232.6px;top:87.0px;filter:blur(0.25px);" width="11" height="11" viewBox="232.6 87.0 11 11"><g transform="translate(233.6 88.00)"><path d="M0.2 0 H5.6 L8 2.4 V8.6 H0.2Z" fill="#7f98c6"/><path d="M0.2 0 H5.4 L7.2 1.8 V7.8 H0.2Z" fill="#fbfcff"/><path d="M5.4 0 L7.6 2.2 H5.4Z" fill="#5e7fbe"/><path d="M1.2 2.2 H4.8" stroke="#e2813e" stroke-width="0.9"/><path d="M1.2 4 H6.4 M1.2 5.6 H6.4" stroke="#45a662" stroke-width="0.9"/><path d="M1.2 7.1 H6.4" stroke="#3c8c9c" stroke-width="0.9"/></g></svg>
<span class="t" style="left:243.70px;transform-origin:0 0;top:88.96px;font-size:7.4px;line-height:8.88px;color:#000000;transform:scaleX(0.800);">CO</span>
<span class="t" style="left:263.30px;transform-origin:0 0;top:88.96px;font-size:7.4px;line-height:8.88px;color:#000000;transform:scaleX(0.855);">Consignaciones</span>
<span class="t" style="left:369.50px;transform-origin:0 0;top:88.96px;font-size:7.4px;line-height:8.88px;color:#000000;transform:scaleX(0.855);">numero</span>
<span class="t" style="left:437.78px;transform-origin:100% 0;top:88.96px;font-size:7.4px;line-height:8.88px;color:#000000;transform:scaleX(0.855);">2,433</span>
<span class="t" style="left:463.00px;transform-origin:0 0;top:88.96px;font-size:7.4px;line-height:8.88px;color:#000000;transform:scaleX(0.855);">numero</span>
<span class="t" style="left:523.50px;transform-origin:0 0;top:88.96px;font-size:7.4px;line-height:8.88px;color:#000000;transform:scaleX(0.855);">N</span>
<span class="t" style="left:551.80px;transform-origin:0 0;top:88.96px;font-size:7.4px;line-height:8.88px;color:#000000;transform:scaleX(0.855);">N</span>
<span class="t" style="left:590.20px;transform-origin:0 0;top:88.96px;font-size:7.4px;line-height:8.88px;color:#000000;transform:scaleX(0.855);">N</span>
<span class="t" style="left:628.70px;transform-origin:0 0;top:88.96px;font-size:7.4px;line-height:8.88px;color:#000000;transform:scaleX(0.855);">N</span>
<svg style="left:232.6px;top:97.2px;filter:blur(0.25px);" width="11" height="11" viewBox="232.6 97.2 11 11"><g transform="translate(233.6 98.20)"><path d="M0.2 0 H5.6 L8 2.4 V8.6 H0.2Z" fill="#7f98c6"/><path d="M0.2 0 H5.4 L7.2 1.8 V7.8 H0.2Z" fill="#fbfcff"/><path d="M5.4 0 L7.6 2.2 H5.4Z" fill="#5e7fbe"/><path d="M1.2 2.2 H4.8" stroke="#e2813e" stroke-width="0.9"/><path d="M1.2 4 H6.4 M1.2 5.6 H6.4" stroke="#45a662" stroke-width="0.9"/><path d="M1.2 7.1 H6.4" stroke="#3c8c9c" stroke-width="0.9"/></g></svg>
<span class="t" style="left:243.70px;transform-origin:0 0;top:99.16px;font-size:7.4px;line-height:8.88px;color:#000000;transform:scaleX(0.800);">DEP</span>
<span class="t" style="left:263.30px;transform-origin:0 0;top:99.16px;font-size:7.4px;line-height:8.88px;color:#000000;transform:scaleX(0.855);">depreciacion</span>
<span class="t" style="left:452.18px;transform-origin:100% 0;top:99.16px;font-size:7.4px;line-height:8.88px;color:#000000;transform:scaleX(0.855);">0</span>
<span class="t" style="left:523.50px;transform-origin:0 0;top:99.16px;font-size:7.4px;line-height:8.88px;color:#000000;transform:scaleX(0.855);">N</span>
<span class="t" style="left:551.80px;transform-origin:0 0;top:99.16px;font-size:7.4px;line-height:8.88px;color:#000000;transform:scaleX(0.855);">N</span>
<span class="t" style="left:590.20px;transform-origin:0 0;top:99.16px;font-size:7.4px;line-height:8.88px;color:#000000;transform:scaleX(0.855);">N</span>
<span class="t" style="left:628.70px;transform-origin:0 0;top:99.16px;font-size:7.4px;line-height:8.88px;color:#000000;transform:scaleX(0.855);">N</span>
<svg style="left:232.6px;top:107.4px;filter:blur(0.25px);" width="11" height="11" viewBox="232.6 107.4 11 11"><g transform="translate(233.6 108.40)"><path d="M0.2 0 H5.6 L8 2.4 V8.6 H0.2Z" fill="#7f98c6"/><path d="M0.2 0 H5.4 L7.2 1.8 V7.8 H0.2Z" fill="#fbfcff"/><path d="M5.4 0 L7.6 2.2 H5.4Z" fill="#5e7fbe"/><path d="M1.2 2.2 H4.8" stroke="#e2813e" stroke-width="0.9"/><path d="M1.2 4 H6.4 M1.2 5.6 H6.4" stroke="#45a662" stroke-width="0.9"/><path d="M1.2 7.1 H6.4" stroke="#3c8c9c" stroke-width="0.9"/></g></svg>
<span class="t" style="left:243.70px;transform-origin:0 0;top:109.36px;font-size:7.4px;line-height:8.88px;color:#000000;transform:scaleX(0.800);">DES</span>
<span class="t" style="left:263.30px;transform-origin:0 0;top:109.36px;font-size:7.4px;line-height:8.88px;color:#000000;transform:scaleX(0.855);">DESPLAZAMIENTOS</span>
<span class="t" style="left:452.18px;transform-origin:100% 0;top:109.36px;font-size:7.4px;line-height:8.88px;color:#000000;transform:scaleX(0.855);">0</span>
<span class="t" style="left:523.50px;transform-origin:0 0;top:109.36px;font-size:7.4px;line-height:8.88px;color:#000000;transform:scaleX(0.855);">N</span>
<span class="t" style="left:551.80px;transform-origin:0 0;top:109.36px;font-size:7.4px;line-height:8.88px;color:#000000;transform:scaleX(0.855);">N</span>
<span class="t" style="left:590.20px;transform-origin:0 0;top:109.36px;font-size:7.4px;line-height:8.88px;color:#000000;transform:scaleX(0.855);">N</span>
<span class="t" style="left:628.70px;transform-origin:0 0;top:109.36px;font-size:7.4px;line-height:8.88px;color:#000000;transform:scaleX(0.855);">N</span>
<svg style="left:232.6px;top:117.6px;filter:blur(0.25px);" width="11" height="11" viewBox="232.6 117.6 11 11"><g transform="translate(233.6 118.60)"><path d="M0.2 0 H5.6 L8 2.4 V8.6 H0.2Z" fill="#7f98c6"/><path d="M0.2 0 H5.4 L7.2 1.8 V7.8 H0.2Z" fill="#fbfcff"/><path d="M5.4 0 L7.6 2.2 H5.4Z" fill="#5e7fbe"/><path d="M1.2 2.2 H4.8" stroke="#e2813e" stroke-width="0.9"/><path d="M1.2 4 H6.4 M1.2 5.6 H6.4" stroke="#45a662" stroke-width="0.9"/><path d="M1.2 7.1 H6.4" stroke="#3c8c9c" stroke-width="0.9"/></g></svg>
<span class="t" style="left:243.70px;transform-origin:0 0;top:119.56px;font-size:7.4px;line-height:8.88px;color:#000000;transform:scaleX(0.800);">DE</span>
<span class="t" style="left:263.30px;transform-origin:0 0;top:119.56px;font-size:7.4px;line-height:8.88px;color:#000000;transform:scaleX(0.855);">Documento Equivalente</span>
<span class="t" style="left:452.18px;transform-origin:100% 0;top:119.56px;font-size:7.4px;line-height:8.88px;color:#000000;transform:scaleX(0.855);">0</span>
<span class="t" style="left:523.50px;transform-origin:0 0;top:119.56px;font-size:7.4px;line-height:8.88px;color:#000000;transform:scaleX(0.855);">N</span>
<span class="t" style="left:551.80px;transform-origin:0 0;top:119.56px;font-size:7.4px;line-height:8.88px;color:#000000;transform:scaleX(0.855);">N</span>
<span class="t" style="left:590.20px;transform-origin:0 0;top:119.56px;font-size:7.4px;line-height:8.88px;color:#000000;transform:scaleX(0.855);">N</span>
<span class="t" style="left:628.70px;transform-origin:0 0;top:119.56px;font-size:7.4px;line-height:8.88px;color:#000000;transform:scaleX(0.855);">N</span>
<div class="a" style="left:242px;top:128.00px;width:522px;height:10.2px;background:#3488ea"></div>
<svg style="left:232.6px;top:127.8px;filter:blur(0.25px);" width="11" height="11" viewBox="232.6 127.8 11 11"><g transform="translate(233.6 128.80)"><path d="M0.2 0 H5.6 L8 2.4 V8.6 H0.2Z" fill="#7f98c6"/><path d="M0.2 0 H5.4 L7.2 1.8 V7.8 H0.2Z" fill="#fbfcff"/><path d="M5.4 0 L7.6 2.2 H5.4Z" fill="#5e7fbe"/><path d="M1.2 2.2 H4.8" stroke="#e2813e" stroke-width="0.9"/><path d="M1.2 4 H6.4 M1.2 5.6 H6.4" stroke="#45a662" stroke-width="0.9"/><path d="M1.2 7.1 H6.4" stroke="#3c8c9c" stroke-width="0.9"/></g></svg>
<div class="a" style="left:233.5px;top:128.60px;width:8.4px;height:9px;background:#3488ea;opacity:0.5;filter:blur(0.3px)"></div>
<span class="t" style="left:243.70px;transform-origin:0 0;top:129.76px;font-size:7.4px;line-height:8.88px;color:#eaf3ff;transform:scaleX(0.800);">FC</span>
<span class="t" style="left:263.30px;transform-origin:0 0;top:129.76px;font-size:7.4px;line-height:8.88px;color:#eaf3ff;transform:scaleX(0.855);">Facturas de Compra</span>
<span class="t" style="left:369.50px;transform-origin:0 0;top:129.76px;font-size:7.4px;line-height:8.88px;color:#eaf3ff;transform:scaleX(0.855);">Consecutivo</span>
<span class="t" style="left:452.18px;transform-origin:100% 0;top:129.76px;font-size:7.4px;line-height:8.88px;color:#eaf3ff;transform:scaleX(0.855);">0</span>
<span class="t" style="left:463.00px;transform-origin:0 0;top:129.76px;font-size:7.4px;line-height:8.88px;color:#eaf3ff;transform:scaleX(0.855);">Factura Proveedor</span>
<span class="t" style="left:523.50px;transform-origin:0 0;top:129.76px;font-size:7.4px;line-height:8.88px;color:#eaf3ff;transform:scaleX(0.855);">N</span>
<span class="t" style="left:551.80px;transform-origin:0 0;top:129.76px;font-size:7.4px;line-height:8.88px;color:#eaf3ff;transform:scaleX(0.855);">N</span>
<span class="t" style="left:590.20px;transform-origin:0 0;top:129.76px;font-size:7.4px;line-height:8.88px;color:#eaf3ff;transform:scaleX(0.855);">N</span>
<span class="t" style="left:628.70px;transform-origin:0 0;top:129.76px;font-size:7.4px;line-height:8.88px;color:#eaf3ff;transform:scaleX(0.855);">N</span>
<svg style="left:232.6px;top:138.0px;filter:blur(0.25px);" width="11" height="11" viewBox="232.6 138.0 11 11"><g transform="translate(233.6 139.00)"><path d="M0.2 0 H5.6 L8 2.4 V8.6 H0.2Z" fill="#7f98c6"/><path d="M0.2 0 H5.4 L7.2 1.8 V7.8 H0.2Z" fill="#fbfcff"/><path d="M5.4 0 L7.6 2.2 H5.4Z" fill="#5e7fbe"/><path d="M1.2 2.2 H4.8" stroke="#e2813e" stroke-width="0.9"/><path d="M1.2 4 H6.4 M1.2 5.6 H6.4" stroke="#45a662" stroke-width="0.9"/><path d="M1.2 7.1 H6.4" stroke="#3c8c9c" stroke-width="0.9"/></g></svg>
<span class="t" style="left:243.70px;transform-origin:0 0;top:139.96px;font-size:7.4px;line-height:8.88px;color:#000000;transform:scaleX(0.800);">FM</span>
<span class="t" style="left:263.30px;transform-origin:0 0;top:139.96px;font-size:7.4px;line-height:8.88px;color:#000000;transform:scaleX(0.855);">Facturas Manuales</span>
<span class="t" style="left:452.18px;transform-origin:100% 0;top:139.96px;font-size:7.4px;line-height:8.88px;color:#000000;transform:scaleX(0.855);">0</span>
<span class="t" style="left:523.50px;transform-origin:0 0;top:139.96px;font-size:7.4px;line-height:8.88px;color:#000000;transform:scaleX(0.855);">N</span>
<span class="t" style="left:551.80px;transform-origin:0 0;top:139.96px;font-size:7.4px;line-height:8.88px;color:#000000;transform:scaleX(0.855);">N</span>
<span class="t" style="left:590.20px;transform-origin:0 0;top:139.96px;font-size:7.4px;line-height:8.88px;color:#000000;transform:scaleX(0.855);">N</span>
<span class="t" style="left:628.70px;transform-origin:0 0;top:139.96px;font-size:7.4px;line-height:8.88px;color:#000000;transform:scaleX(0.855);">N</span>
<svg style="left:232.6px;top:148.2px;filter:blur(0.25px);" width="11" height="11" viewBox="232.6 148.2 11 11"><g transform="translate(233.6 149.20)"><path d="M0.2 0 H5.6 L8 2.4 V8.6 H0.2Z" fill="#7f98c6"/><path d="M0.2 0 H5.4 L7.2 1.8 V7.8 H0.2Z" fill="#fbfcff"/><path d="M5.4 0 L7.6 2.2 H5.4Z" fill="#5e7fbe"/><path d="M1.2 2.2 H4.8" stroke="#e2813e" stroke-width="0.9"/><path d="M1.2 4 H6.4 M1.2 5.6 H6.4" stroke="#45a662" stroke-width="0.9"/><path d="M1.2 7.1 H6.4" stroke="#3c8c9c" stroke-width="0.9"/></g></svg>
<span class="t" style="left:243.70px;transform-origin:0 0;top:150.16px;font-size:7.4px;line-height:8.88px;color:#000000;transform:scaleX(0.800);">FV</span>
<span class="t" style="left:263.30px;transform-origin:0 0;top:150.16px;font-size:7.4px;line-height:8.88px;color:#000000;transform:scaleX(0.855);">Facturas Ventas</span>
<span class="t" style="left:430.10px;transform-origin:100% 0;top:150.16px;font-size:7.4px;line-height:8.88px;color:#000000;transform:scaleX(0.855);">116,748</span>
<span class="t" style="left:523.50px;transform-origin:0 0;top:150.16px;font-size:7.4px;line-height:8.88px;color:#000000;transform:scaleX(0.855);">N</span>
<span class="t" style="left:551.80px;transform-origin:0 0;top:150.16px;font-size:7.4px;line-height:8.88px;color:#000000;transform:scaleX(0.855);">N</span>
<span class="t" style="left:590.20px;transform-origin:0 0;top:150.16px;font-size:7.4px;line-height:8.88px;color:#000000;transform:scaleX(0.855);">N</span>
<span class="t" style="left:628.70px;transform-origin:0 0;top:150.16px;font-size:7.4px;line-height:8.88px;color:#000000;transform:scaleX(0.855);">S</span>
<svg style="left:232.6px;top:158.4px;filter:blur(0.25px);" width="11" height="11" viewBox="232.6 158.4 11 11"><g transform="translate(233.6 159.40)"><path d="M0.2 0 H5.6 L8 2.4 V8.6 H0.2Z" fill="#7f98c6"/><path d="M0.2 0 H5.4 L7.2 1.8 V7.8 H0.2Z" fill="#fbfcff"/><path d="M5.4 0 L7.6 2.2 H5.4Z" fill="#5e7fbe"/><path d="M1.2 2.2 H4.8" stroke="#e2813e" stroke-width="0.9"/><path d="M1.2 4 H6.4 M1.2 5.6 H6.4" stroke="#45a662" stroke-width="0.9"/><path d="M1.2 7.1 H6.4" stroke="#3c8c9c" stroke-width="0.9"/></g></svg>
<span class="t" style="left:243.70px;transform-origin:0 0;top:160.36px;font-size:7.4px;line-height:8.88px;color:#000000;transform:scaleX(0.800);">NO</span>
<span class="t" style="left:263.30px;transform-origin:0 0;top:160.36px;font-size:7.4px;line-height:8.88px;color:#000000;transform:scaleX(0.855);">Nomina</span>
<span class="t" style="left:448.07px;transform-origin:100% 0;top:160.36px;font-size:7.4px;line-height:8.88px;color:#000000;transform:scaleX(0.855);">41</span>
<span class="t" style="left:523.50px;transform-origin:0 0;top:160.36px;font-size:7.4px;line-height:8.88px;color:#000000;transform:scaleX(0.855);">N</span>
<span class="t" style="left:551.80px;transform-origin:0 0;top:160.36px;font-size:7.4px;line-height:8.88px;color:#000000;transform:scaleX(0.855);">N</span>
<span class="t" style="left:590.20px;transform-origin:0 0;top:160.36px;font-size:7.4px;line-height:8.88px;color:#000000;transform:scaleX(0.855);">N</span>
<span class="t" style="left:628.70px;transform-origin:0 0;top:160.36px;font-size:7.4px;line-height:8.88px;color:#000000;transform:scaleX(0.855);">N</span>
<svg style="left:232.6px;top:168.6px;filter:blur(0.25px);" width="11" height="11" viewBox="232.6 168.6 11 11"><g transform="translate(233.6 169.60)"><path d="M0.2 0 H5.6 L8 2.4 V8.6 H0.2Z" fill="#7f98c6"/><path d="M0.2 0 H5.4 L7.2 1.8 V7.8 H0.2Z" fill="#fbfcff"/><path d="M5.4 0 L7.6 2.2 H5.4Z" fill="#5e7fbe"/><path d="M1.2 2.2 H4.8" stroke="#e2813e" stroke-width="0.9"/><path d="M1.2 4 H6.4 M1.2 5.6 H6.4" stroke="#45a662" stroke-width="0.9"/><path d="M1.2 7.1 H6.4" stroke="#3c8c9c" stroke-width="0.9"/></g></svg>
<span class="t" style="left:243.70px;transform-origin:0 0;top:170.56px;font-size:7.4px;line-height:8.88px;color:#000000;transform:scaleX(0.800);">NB</span>
<span class="t" style="left:263.30px;transform-origin:0 0;top:170.56px;font-size:7.4px;line-height:8.88px;color:#000000;transform:scaleX(0.855);">Nota Bancaria</span>
<span class="t" style="left:452.18px;transform-origin:100% 0;top:170.56px;font-size:7.4px;line-height:8.88px;color:#000000;transform:scaleX(0.855);">9</span>
<span class="t" style="left:523.50px;transform-origin:0 0;top:170.56px;font-size:7.4px;line-height:8.88px;color:#000000;transform:scaleX(0.855);">N</span>
<span class="t" style="left:551.80px;transform-origin:0 0;top:170.56px;font-size:7.4px;line-height:8.88px;color:#000000;transform:scaleX(0.855);">N</span>
<span class="t" style="left:590.20px;transform-origin:0 0;top:170.56px;font-size:7.4px;line-height:8.88px;color:#000000;transform:scaleX(0.855);">N</span>
<span class="t" style="left:628.70px;transform-origin:0 0;top:170.56px;font-size:7.4px;line-height:8.88px;color:#000000;transform:scaleX(0.855);">N</span>
<svg style="left:232.6px;top:178.8px;filter:blur(0.25px);" width="11" height="11" viewBox="232.6 178.8 11 11"><g transform="translate(233.6 179.80)"><path d="M0.2 0 H5.6 L8 2.4 V8.6 H0.2Z" fill="#7f98c6"/><path d="M0.2 0 H5.4 L7.2 1.8 V7.8 H0.2Z" fill="#fbfcff"/><path d="M5.4 0 L7.6 2.2 H5.4Z" fill="#5e7fbe"/><path d="M1.2 2.2 H4.8" stroke="#e2813e" stroke-width="0.9"/><path d="M1.2 4 H6.4 M1.2 5.6 H6.4" stroke="#45a662" stroke-width="0.9"/><path d="M1.2 7.1 H6.4" stroke="#3c8c9c" stroke-width="0.9"/></g></svg>
<span class="t" style="left:243.70px;transform-origin:0 0;top:180.76px;font-size:7.4px;line-height:8.88px;color:#000000;transform:scaleX(0.800);">NCC</span>
<span class="t" style="left:263.30px;transform-origin:0 0;top:180.76px;font-size:7.4px;line-height:8.88px;color:#000000;transform:scaleX(0.855);">Nota Credito Cliente</span>
<span class="t" style="left:369.50px;transform-origin:0 0;top:180.76px;font-size:7.4px;line-height:8.88px;color:#000000;transform:scaleX(0.855);">NCC</span>
<span class="t" style="left:433.67px;transform-origin:100% 0;top:180.76px;font-size:7.4px;line-height:8.88px;color:#000000;transform:scaleX(0.855);">23,576</span>
<span class="t" style="left:463.00px;transform-origin:0 0;top:180.76px;font-size:7.4px;line-height:8.88px;color:#000000;transform:scaleX(0.855);">NCC</span>
<span class="t" style="left:523.50px;transform-origin:0 0;top:180.76px;font-size:7.4px;line-height:8.88px;color:#000000;transform:scaleX(0.855);">N</span>
<span class="t" style="left:551.80px;transform-origin:0 0;top:180.76px;font-size:7.4px;line-height:8.88px;color:#000000;transform:scaleX(0.855);">N</span>
<span class="t" style="left:590.20px;transform-origin:0 0;top:180.76px;font-size:7.4px;line-height:8.88px;color:#000000;transform:scaleX(0.855);">N</span>
<span class="t" style="left:628.70px;transform-origin:0 0;top:180.76px;font-size:7.4px;line-height:8.88px;color:#000000;transform:scaleX(0.855);">N</span>
<svg style="left:232.6px;top:189.0px;filter:blur(0.25px);" width="11" height="11" viewBox="232.6 189.0 11 11"><g transform="translate(233.6 190.00)"><path d="M0.2 0 H5.6 L8 2.4 V8.6 H0.2Z" fill="#7f98c6"/><path d="M0.2 0 H5.4 L7.2 1.8 V7.8 H0.2Z" fill="#fbfcff"/><path d="M5.4 0 L7.6 2.2 H5.4Z" fill="#5e7fbe"/><path d="M1.2 2.2 H4.8" stroke="#e2813e" stroke-width="0.9"/><path d="M1.2 4 H6.4 M1.2 5.6 H6.4" stroke="#45a662" stroke-width="0.9"/><path d="M1.2 7.1 H6.4" stroke="#3c8c9c" stroke-width="0.9"/></g></svg>
<span class="t" style="left:243.70px;transform-origin:0 0;top:190.96px;font-size:7.4px;line-height:8.88px;color:#000000;transform:scaleX(0.800);">NCP</span>
<span class="t" style="left:263.30px;transform-origin:0 0;top:190.96px;font-size:7.4px;line-height:8.88px;color:#000000;transform:scaleX(0.855);">Nota Credito Proveedores</span>
<span class="t" style="left:369.50px;transform-origin:0 0;top:190.96px;font-size:7.4px;line-height:8.88px;color:#000000;transform:scaleX(0.855);">Nota Credito No</span>
<span class="t" style="left:452.18px;transform-origin:100% 0;top:190.96px;font-size:7.4px;line-height:8.88px;color:#000000;transform:scaleX(0.855);">3</span>
<span class="t" style="left:463.00px;transform-origin:0 0;top:190.96px;font-size:7.4px;line-height:8.88px;color:#000000;transform:scaleX(0.855);">Factura Proveedor</span>
<span class="t" style="left:523.50px;transform-origin:0 0;top:190.96px;font-size:7.4px;line-height:8.88px;color:#000000;transform:scaleX(0.855);">N</span>
<span class="t" style="left:551.80px;transform-origin:0 0;top:190.96px;font-size:7.4px;line-height:8.88px;color:#000000;transform:scaleX(0.855);">N</span>
<span class="t" style="left:590.20px;transform-origin:0 0;top:190.96px;font-size:7.4px;line-height:8.88px;color:#000000;transform:scaleX(0.855);">N</span>
<span class="t" style="left:628.70px;transform-origin:0 0;top:190.96px;font-size:7.4px;line-height:8.88px;color:#000000;transform:scaleX(0.855);">N</span>
<svg style="left:232.6px;top:199.2px;filter:blur(0.25px);" width="11" height="11" viewBox="232.6 199.2 11 11"><g transform="translate(233.6 200.20)"><path d="M0.2 0 H5.6 L8 2.4 V8.6 H0.2Z" fill="#7f98c6"/><path d="M0.2 0 H5.4 L7.2 1.8 V7.8 H0.2Z" fill="#fbfcff"/><path d="M5.4 0 L7.6 2.2 H5.4Z" fill="#5e7fbe"/><path d="M1.2 2.2 H4.8" stroke="#e2813e" stroke-width="0.9"/><path d="M1.2 4 H6.4 M1.2 5.6 H6.4" stroke="#45a662" stroke-width="0.9"/><path d="M1.2 7.1 H6.4" stroke="#3c8c9c" stroke-width="0.9"/></g></svg>
<span class="t" style="left:243.70px;transform-origin:0 0;top:201.16px;font-size:7.4px;line-height:8.88px;color:#000000;transform:scaleX(0.800);">NDC</span>
<span class="t" style="left:263.30px;transform-origin:0 0;top:201.16px;font-size:7.4px;line-height:8.88px;color:#000000;transform:scaleX(0.855);">Nota Debito Clientes</span>
<span class="t" style="left:369.50px;transform-origin:0 0;top:201.16px;font-size:7.4px;line-height:8.88px;color:#000000;transform:scaleX(0.855);">NDC</span>
<span class="t" style="left:437.78px;transform-origin:100% 0;top:201.16px;font-size:7.4px;line-height:8.88px;color:#000000;transform:scaleX(0.855);">1,641</span>
<span class="t" style="left:463.00px;transform-origin:0 0;top:201.16px;font-size:7.4px;line-height:8.88px;color:#000000;transform:scaleX(0.855);">NDC</span>
<span class="t" style="left:523.50px;transform-origin:0 0;top:201.16px;font-size:7.4px;line-height:8.88px;color:#000000;transform:scaleX(0.855);">N</span>
<span class="t" style="left:551.80px;transform-origin:0 0;top:201.16px;font-size:7.4px;line-height:8.88px;color:#000000;transform:scaleX(0.855);">N</span>
<span class="t" style="left:590.20px;transform-origin:0 0;top:201.16px;font-size:7.4px;line-height:8.88px;color:#000000;transform:scaleX(0.855);">N</span>
<span class="t" style="left:628.70px;transform-origin:0 0;top:201.16px;font-size:7.4px;line-height:8.88px;color:#000000;transform:scaleX(0.855);">N</span>
<svg style="left:232.6px;top:209.4px;filter:blur(0.25px);" width="11" height="11" viewBox="232.6 209.4 11 11"><g transform="translate(233.6 210.40)"><path d="M0.2 0 H5.6 L8 2.4 V8.6 H0.2Z" fill="#7f98c6"/><path d="M0.2 0 H5.4 L7.2 1.8 V7.8 H0.2Z" fill="#fbfcff"/><path d="M5.4 0 L7.6 2.2 H5.4Z" fill="#5e7fbe"/><path d="M1.2 2.2 H4.8" stroke="#e2813e" stroke-width="0.9"/><path d="M1.2 4 H6.4 M1.2 5.6 H6.4" stroke="#45a662" stroke-width="0.9"/><path d="M1.2 7.1 H6.4" stroke="#3c8c9c" stroke-width="0.9"/></g></svg>
<span class="t" style="left:243.70px;transform-origin:0 0;top:211.36px;font-size:7.4px;line-height:8.88px;color:#000000;transform:scaleX(0.800);">NDP</span>
<span class="t" style="left:263.30px;transform-origin:0 0;top:211.36px;font-size:7.4px;line-height:8.88px;color:#000000;transform:scaleX(0.855);">Nota Debito Proveedor</span>
<span class="t" style="left:369.50px;transform-origin:0 0;top:211.36px;font-size:7.4px;line-height:8.88px;color:#000000;transform:scaleX(0.855);">Factura</span>
<span class="t" style="left:452.18px;transform-origin:100% 0;top:211.36px;font-size:7.4px;line-height:8.88px;color:#000000;transform:scaleX(0.855);">0</span>
<span class="t" style="left:523.50px;transform-origin:0 0;top:211.36px;font-size:7.4px;line-height:8.88px;color:#000000;transform:scaleX(0.855);">N</span>
<span class="t" style="left:551.80px;transform-origin:0 0;top:211.36px;font-size:7.4px;line-height:8.88px;color:#000000;transform:scaleX(0.855);">N</span>
<span class="t" style="left:590.20px;transform-origin:0 0;top:211.36px;font-size:7.4px;line-height:8.88px;color:#000000;transform:scaleX(0.855);">N</span>
<span class="t" style="left:628.70px;transform-origin:0 0;top:211.36px;font-size:7.4px;line-height:8.88px;color:#000000;transform:scaleX(0.855);">N</span>
<svg style="left:232.6px;top:219.6px;filter:blur(0.25px);" width="11" height="11" viewBox="232.6 219.6 11 11"><g transform="translate(233.6 220.60)"><path d="M0.2 0 H5.6 L8 2.4 V8.6 H0.2Z" fill="#7f98c6"/><path d="M0.2 0 H5.4 L7.2 1.8 V7.8 H0.2Z" fill="#fbfcff"/><path d="M5.4 0 L7.6 2.2 H5.4Z" fill="#5e7fbe"/><path d="M1.2 2.2 H4.8" stroke="#e2813e" stroke-width="0.9"/><path d="M1.2 4 H6.4 M1.2 5.6 H6.4" stroke="#45a662" stroke-width="0.9"/><path d="M1.2 7.1 H6.4" stroke="#3c8c9c" stroke-width="0.9"/></g></svg>
<span class="t" style="left:243.70px;transform-origin:0 0;top:221.56px;font-size:7.4px;line-height:8.88px;color:#000000;transform:scaleX(0.800);">NT</span>
<span class="t" style="left:263.30px;transform-origin:0 0;top:221.56px;font-size:7.4px;line-height:8.88px;color:#000000;transform:scaleX(0.855);">Notas de Contabilidad</span>
<span class="t" style="left:443.95px;transform-origin:100% 0;top:221.56px;font-size:7.4px;line-height:8.88px;color:#000000;transform:scaleX(0.855);">915</span>
<span class="t" style="left:463.00px;transform-origin:0 0;top:221.56px;font-size:7.4px;line-height:8.88px;color:#000000;transform:scaleX(0.855);">Documento</span>
<span class="t" style="left:523.50px;transform-origin:0 0;top:221.56px;font-size:7.4px;line-height:8.88px;color:#000000;transform:scaleX(0.855);">N</span>
<span class="t" style="left:551.80px;transform-origin:0 0;top:221.56px;font-size:7.4px;line-height:8.88px;color:#000000;transform:scaleX(0.855);">N</span>
<span class="t" style="left:590.20px;transform-origin:0 0;top:221.56px;font-size:7.4px;line-height:8.88px;color:#000000;transform:scaleX(0.855);">N</span>
<span class="t" style="left:628.70px;transform-origin:0 0;top:221.56px;font-size:7.4px;line-height:8.88px;color:#000000;transform:scaleX(0.855);">N</span>
<svg style="left:232.6px;top:229.8px;filter:blur(0.25px);" width="11" height="11" viewBox="232.6 229.8 11 11"><g transform="translate(233.6 230.80)"><path d="M0.2 0 H5.6 L8 2.4 V8.6 H0.2Z" fill="#7f98c6"/><path d="M0.2 0 H5.4 L7.2 1.8 V7.8 H0.2Z" fill="#fbfcff"/><path d="M5.4 0 L7.6 2.2 H5.4Z" fill="#5e7fbe"/><path d="M1.2 2.2 H4.8" stroke="#e2813e" stroke-width="0.9"/><path d="M1.2 4 H6.4 M1.2 5.6 H6.4" stroke="#45a662" stroke-width="0.9"/><path d="M1.2 7.1 H6.4" stroke="#3c8c9c" stroke-width="0.9"/></g></svg>
<span class="t" style="left:243.70px;transform-origin:0 0;top:231.76px;font-size:7.4px;line-height:8.88px;color:#000000;transform:scaleX(0.800);">PAR</span>
<span class="t" style="left:263.30px;transform-origin:0 0;top:231.76px;font-size:7.4px;line-height:8.88px;color:#000000;transform:scaleX(0.855);">Parafiscales</span>
<span class="t" style="left:443.95px;transform-origin:100% 0;top:231.76px;font-size:7.4px;line-height:8.88px;color:#000000;transform:scaleX(0.855);">127</span>
<span class="t" style="left:523.50px;transform-origin:0 0;top:231.76px;font-size:7.4px;line-height:8.88px;color:#000000;transform:scaleX(0.855);">N</span>
<span class="t" style="left:551.80px;transform-origin:0 0;top:231.76px;font-size:7.4px;line-height:8.88px;color:#000000;transform:scaleX(0.855);">N</span>
<span class="t" style="left:590.20px;transform-origin:0 0;top:231.76px;font-size:7.4px;line-height:8.88px;color:#000000;transform:scaleX(0.855);">N</span>
<span class="t" style="left:628.70px;transform-origin:0 0;top:231.76px;font-size:7.4px;line-height:8.88px;color:#000000;transform:scaleX(0.855);">N</span>
<svg style="left:232.6px;top:240.0px;filter:blur(0.25px);" width="11" height="11" viewBox="232.6 240.0 11 11"><g transform="translate(233.6 241.00)"><path d="M0.2 0 H5.6 L8 2.4 V8.6 H0.2Z" fill="#7f98c6"/><path d="M0.2 0 H5.4 L7.2 1.8 V7.8 H0.2Z" fill="#fbfcff"/><path d="M5.4 0 L7.6 2.2 H5.4Z" fill="#5e7fbe"/><path d="M1.2 2.2 H4.8" stroke="#e2813e" stroke-width="0.9"/><path d="M1.2 4 H6.4 M1.2 5.6 H6.4" stroke="#45a662" stroke-width="0.9"/><path d="M1.2 7.1 H6.4" stroke="#3c8c9c" stroke-width="0.9"/></g></svg>
<span class="t" style="left:243.70px;transform-origin:0 0;top:241.96px;font-size:7.4px;line-height:8.88px;color:#000000;transform:scaleX(0.800);">PA</span>
<span class="t" style="left:263.30px;transform-origin:0 0;top:241.96px;font-size:7.4px;line-height:8.88px;color:#000000;transform:scaleX(0.855);">Productos Averiados</span>
<span class="t" style="left:452.18px;transform-origin:100% 0;top:241.96px;font-size:7.4px;line-height:8.88px;color:#000000;transform:scaleX(0.855);">0</span>
<span class="t" style="left:523.50px;transform-origin:0 0;top:241.96px;font-size:7.4px;line-height:8.88px;color:#000000;transform:scaleX(0.855);">N</span>
<span class="t" style="left:551.80px;transform-origin:0 0;top:241.96px;font-size:7.4px;line-height:8.88px;color:#000000;transform:scaleX(0.855);">N</span>
<span class="t" style="left:590.20px;transform-origin:0 0;top:241.96px;font-size:7.4px;line-height:8.88px;color:#000000;transform:scaleX(0.855);">N</span>
<span class="t" style="left:628.70px;transform-origin:0 0;top:241.96px;font-size:7.4px;line-height:8.88px;color:#000000;transform:scaleX(0.855);">N</span>
<svg style="left:232.6px;top:250.2px;filter:blur(0.25px);" width="11" height="11" viewBox="232.6 250.2 11 11"><g transform="translate(233.6 251.20)"><path d="M0.2 0 H5.6 L8 2.4 V8.6 H0.2Z" fill="#7f98c6"/><path d="M0.2 0 H5.4 L7.2 1.8 V7.8 H0.2Z" fill="#fbfcff"/><path d="M5.4 0 L7.6 2.2 H5.4Z" fill="#5e7fbe"/><path d="M1.2 2.2 H4.8" stroke="#e2813e" stroke-width="0.9"/><path d="M1.2 4 H6.4 M1.2 5.6 H6.4" stroke="#45a662" stroke-width="0.9"/><path d="M1.2 7.1 H6.4" stroke="#3c8c9c" stroke-width="0.9"/></g></svg>
<span class="t" style="left:243.70px;transform-origin:0 0;top:252.16px;font-size:7.4px;line-height:8.88px;color:#000000;transform:scaleX(0.800);">PRT</span>
<span class="t" style="left:263.30px;transform-origin:0 0;top:252.16px;font-size:7.4px;line-height:8.88px;color:#000000;transform:scaleX(0.855);">PRORRATEO</span>
<span class="t" style="left:452.18px;transform-origin:100% 0;top:252.16px;font-size:7.4px;line-height:8.88px;color:#000000;transform:scaleX(0.855);">0</span>
<span class="t" style="left:523.50px;transform-origin:0 0;top:252.16px;font-size:7.4px;line-height:8.88px;color:#000000;transform:scaleX(0.855);">S</span>
<span class="t" style="left:551.80px;transform-origin:0 0;top:252.16px;font-size:7.4px;line-height:8.88px;color:#000000;transform:scaleX(0.855);">N</span>
<span class="t" style="left:590.20px;transform-origin:0 0;top:252.16px;font-size:7.4px;line-height:8.88px;color:#000000;transform:scaleX(0.855);">N</span>
<span class="t" style="left:628.70px;transform-origin:0 0;top:252.16px;font-size:7.4px;line-height:8.88px;color:#000000;transform:scaleX(0.855);">N</span>
<svg style="left:232.6px;top:260.4px;filter:blur(0.25px);" width="11" height="11" viewBox="232.6 260.4 11 11"><g transform="translate(233.6 261.40)"><path d="M0.2 0 H5.6 L8 2.4 V8.6 H0.2Z" fill="#7f98c6"/><path d="M0.2 0 H5.4 L7.2 1.8 V7.8 H0.2Z" fill="#fbfcff"/><path d="M5.4 0 L7.6 2.2 H5.4Z" fill="#5e7fbe"/><path d="M1.2 2.2 H4.8" stroke="#e2813e" stroke-width="0.9"/><path d="M1.2 4 H6.4 M1.2 5.6 H6.4" stroke="#45a662" stroke-width="0.9"/><path d="M1.2 7.1 H6.4" stroke="#3c8c9c" stroke-width="0.9"/></g></svg>
<span class="t" style="left:243.70px;transform-origin:0 0;top:262.36px;font-size:7.4px;line-height:8.88px;color:#000000;transform:scaleX(0.800);">NOP</span>
<span class="t" style="left:263.30px;transform-origin:0 0;top:262.36px;font-size:7.4px;line-height:8.88px;color:#000000;transform:scaleX(0.855);">Provisiones prestaciones Socia</span>
<span class="t" style="left:448.07px;transform-origin:100% 0;top:262.36px;font-size:7.4px;line-height:8.88px;color:#000000;transform:scaleX(0.855);">29</span>
<span class="t" style="left:523.50px;transform-origin:0 0;top:262.36px;font-size:7.4px;line-height:8.88px;color:#000000;transform:scaleX(0.855);">N</span>
<span class="t" style="left:551.80px;transform-origin:0 0;top:262.36px;font-size:7.4px;line-height:8.88px;color:#000000;transform:scaleX(0.855);">N</span>
<span class="t" style="left:590.20px;transform-origin:0 0;top:262.36px;font-size:7.4px;line-height:8.88px;color:#000000;transform:scaleX(0.855);">N</span>
<span class="t" style="left:628.70px;transform-origin:0 0;top:262.36px;font-size:7.4px;line-height:8.88px;color:#000000;transform:scaleX(0.855);">N</span>
<svg style="left:232.6px;top:270.6px;filter:blur(0.25px);" width="11" height="11" viewBox="232.6 270.6 11 11"><g transform="translate(233.6 271.60)"><path d="M0.2 0 H5.6 L8 2.4 V8.6 H0.2Z" fill="#7f98c6"/><path d="M0.2 0 H5.4 L7.2 1.8 V7.8 H0.2Z" fill="#fbfcff"/><path d="M5.4 0 L7.6 2.2 H5.4Z" fill="#5e7fbe"/><path d="M1.2 2.2 H4.8" stroke="#e2813e" stroke-width="0.9"/><path d="M1.2 4 H6.4 M1.2 5.6 H6.4" stroke="#45a662" stroke-width="0.9"/><path d="M1.2 7.1 H6.4" stroke="#3c8c9c" stroke-width="0.9"/></g></svg>
<span class="t" style="left:243.70px;transform-origin:0 0;top:272.56px;font-size:7.4px;line-height:8.88px;color:#000000;transform:scaleX(0.800);">RC</span>
<span class="t" style="left:263.30px;transform-origin:0 0;top:272.56px;font-size:7.4px;line-height:8.88px;color:#000000;transform:scaleX(0.855);">Recibos de Caja</span>
<span class="t" style="left:433.67px;transform-origin:100% 0;top:272.56px;font-size:7.4px;line-height:8.88px;color:#000000;transform:scaleX(0.855);">59,448</span>
<span class="t" style="left:523.50px;transform-origin:0 0;top:272.56px;font-size:7.4px;line-height:8.88px;color:#000000;transform:scaleX(0.855);">N</span>
<span class="t" style="left:551.80px;transform-origin:0 0;top:272.56px;font-size:7.4px;line-height:8.88px;color:#000000;transform:scaleX(0.855);">N</span>
<span class="t" style="left:590.20px;transform-origin:0 0;top:272.56px;font-size:7.4px;line-height:8.88px;color:#000000;transform:scaleX(0.855);">N</span>
<span class="t" style="left:628.70px;transform-origin:0 0;top:272.56px;font-size:7.4px;line-height:8.88px;color:#000000;transform:scaleX(0.855);">N</span>
<svg style="left:232.6px;top:280.8px;filter:blur(0.25px);" width="11" height="11" viewBox="232.6 280.8 11 11"><g transform="translate(233.6 281.80)"><path d="M0.2 0 H5.6 L8 2.4 V8.6 H0.2Z" fill="#7f98c6"/><path d="M0.2 0 H5.4 L7.2 1.8 V7.8 H0.2Z" fill="#fbfcff"/><path d="M5.4 0 L7.6 2.2 H5.4Z" fill="#5e7fbe"/><path d="M1.2 2.2 H4.8" stroke="#e2813e" stroke-width="0.9"/><path d="M1.2 4 H6.4 M1.2 5.6 H6.4" stroke="#45a662" stroke-width="0.9"/><path d="M1.2 7.1 H6.4" stroke="#3c8c9c" stroke-width="0.9"/></g></svg>
<span class="t" style="left:243.70px;transform-origin:0 0;top:282.76px;font-size:7.4px;line-height:8.88px;color:#000000;transform:scaleX(0.800);">REC</span>
<span class="t" style="left:263.30px;transform-origin:0 0;top:282.76px;font-size:7.4px;line-height:8.88px;color:#000000;transform:scaleX(0.855);">REEMBOLSO DE CAJA MENOR</span>
<span class="t" style="left:452.18px;transform-origin:100% 0;top:282.76px;font-size:7.4px;line-height:8.88px;color:#000000;transform:scaleX(0.855);">0</span>
<span class="t" style="left:523.50px;transform-origin:0 0;top:282.76px;font-size:7.4px;line-height:8.88px;color:#000000;transform:scaleX(0.855);">N</span>
<span class="t" style="left:551.80px;transform-origin:0 0;top:282.76px;font-size:7.4px;line-height:8.88px;color:#000000;transform:scaleX(0.855);">N</span>
<span class="t" style="left:590.20px;transform-origin:0 0;top:282.76px;font-size:7.4px;line-height:8.88px;color:#000000;transform:scaleX(0.855);">N</span>
<span class="t" style="left:628.70px;transform-origin:0 0;top:282.76px;font-size:7.4px;line-height:8.88px;color:#000000;transform:scaleX(0.855);">N</span>
<svg style="left:232.6px;top:291.0px;filter:blur(0.25px);" width="11" height="11" viewBox="232.6 291.0 11 11"><g transform="translate(233.6 292.00)"><path d="M0.2 0 H5.6 L8 2.4 V8.6 H0.2Z" fill="#7f98c6"/><path d="M0.2 0 H5.4 L7.2 1.8 V7.8 H0.2Z" fill="#fbfcff"/><path d="M5.4 0 L7.6 2.2 H5.4Z" fill="#5e7fbe"/><path d="M1.2 2.2 H4.8" stroke="#e2813e" stroke-width="0.9"/><path d="M1.2 4 H6.4 M1.2 5.6 H6.4" stroke="#45a662" stroke-width="0.9"/><path d="M1.2 7.1 H6.4" stroke="#3c8c9c" stroke-width="0.9"/></g></svg>
<span class="t" style="left:243.70px;transform-origin:0 0;top:292.96px;font-size:7.4px;line-height:8.88px;color:#000000;transform:scaleX(0.800);">SI</span>
<span class="t" style="left:263.30px;transform-origin:0 0;top:292.96px;font-size:7.4px;line-height:8.88px;color:#000000;transform:scaleX(0.855);">Saldos Iniciales</span>
<span class="t" style="left:452.18px;transform-origin:100% 0;top:292.96px;font-size:7.4px;line-height:8.88px;color:#000000;transform:scaleX(0.855);">7</span>
<span class="t" style="left:523.50px;transform-origin:0 0;top:292.96px;font-size:7.4px;line-height:8.88px;color:#000000;transform:scaleX(0.855);">N</span>
<span class="t" style="left:551.80px;transform-origin:0 0;top:292.96px;font-size:7.4px;line-height:8.88px;color:#000000;transform:scaleX(0.855);">N</span>
<span class="t" style="left:590.20px;transform-origin:0 0;top:292.96px;font-size:7.4px;line-height:8.88px;color:#000000;transform:scaleX(0.855);">N</span>
<span class="t" style="left:628.70px;transform-origin:0 0;top:292.96px;font-size:7.4px;line-height:8.88px;color:#000000;transform:scaleX(0.855);">N</span>
<div class="a" style="left:231px;top:371px;width:533px;height:10px;background:#f1f1ef"></div>
<div class="a" style="left:242.4px;top:371.4px;width:446px;height:9.4px;border-radius:1px;background:linear-gradient(#c9c9c9 0,#f1f1f1 14%,#e7e7e7 42%,#cdcdcd 75%,#b5b5b5 100%);box-shadow:0.6px 0 0 #9f9f9f,-0.6px 0 0 #bdbdbd"></div>
<svg style="left:233px;top:372px" width="8" height="8" viewBox="0 0 8 8"><path d="M4.6 2.2 L2.6 4 L4.6 5.8Z" fill="#333"/></svg>
<svg style="left:756px;top:372px" width="8" height="8" viewBox="0 0 8 8"><path d="M3.2 2.2 L5.2 4 L3.2 5.8Z" fill="#333"/></svg>
<span class="t" style="left:463.25px;transform-origin:50% 0;top:373.68px;font-size:4.2px;line-height:5.04px;color:#666;font-weight:bold;-webkit-text-stroke:0;transform:scaleX(1.300);">III</span>
<span class="t" style="left:234.50px;transform-origin:0 0;top:383.56px;font-size:7.4px;line-height:8.88px;color:#000;transform:scaleX(0.828);">24 registros</span>
<div class="a btn" style="left:234.5px;top:392px;width:48px;height:14px"></div>
<span class="t" style="left:243.07px;transform-origin:50% 0;top:395.96px;font-size:7.4px;line-height:8.88px;color:#000;transform:scaleX(0.850);"><u>A</u>dicionar</span>
<div class="a btn" style="left:285.5px;top:392px;width:47.5px;height:14px"></div>
<span class="t" style="left:294.24px;transform-origin:50% 0;top:395.96px;font-size:7.4px;line-height:8.88px;color:#000;transform:scaleX(0.850);"><u>M</u>odificar</span>
<div class="a btn" style="left:336.5px;top:392px;width:47px;height:14px"></div>
<span class="t" style="left:346.64px;transform-origin:50% 0;top:395.96px;font-size:7.4px;line-height:8.88px;color:#000;transform:scaleX(0.850);"><u>E</u>liminar</span>
<div class="a ib" style="left:388px;top:385.3px;width:19px;height:19px"></div>
<div class="a ib" style="left:412px;top:385.3px;width:19px;height:19px"></div>
<svg style="left:386px;top:384px;filter:blur(0.35px);" width="24" height="23" viewBox="386 384 24 23"><path d="M391.8 386.8 L400.6 386.8 L402 393.4 L392.8 393.4Z" fill="#a4cdf8"/><path d="M393.4 387.6 L399.4 387.6 L400.4 392.6 L394 392.6Z" fill="#cfe6fd"/><path d="M389.6 396.4 L393.2 392.4 L402.6 392.4 L406.3 396 L406.3 400.4 L401.6 403.8 L393.6 403.8 L389.6 400.6Z" fill="#4a4f55"/><path d="M390.6 396.3 L393.6 393.3 L402.2 393.3 L405.2 396.2 L398 398.6Z" fill="#d9dcdf"/><path d="M393.4 393.4 L402.4 393.4 L402.8 394.4 L393 394.4Z" fill="#8f969c"/><path d="M390.4 397 L398 399.4 L405.4 396.8 L405.4 399.8 L401.4 402.8 L393.8 402.8 L390.4 400.2Z" fill="#f6f7f8"/><path d="M391.2 399.4 L397.8 401.6 L404.6 399" stroke="#8b9196" stroke-width="0.9" fill="none"/><path d="M405 397.4 V400" stroke="#3d8b4c" stroke-width="0.9"/></svg>
<svg style="left:410px;top:384px;filter:blur(0.35px);" width="24" height="23" viewBox="410 384 24 23"><defs><radialGradient id="glens" cx="0.55" cy="0.65" r="0.75"><stop offset="0" stop-color="#e4f7ff"/><stop offset="0.6" stop-color="#b2e0fa"/><stop offset="1" stop-color="#66b8ee"/></radialGradient></defs><path d="M425.2 397.8 L429.6 403.1" stroke="#1f66ba" stroke-width="3.1" stroke-linecap="round"/><path d="M425 397.6 L428.8 402.2" stroke="#efd55a" stroke-width="2.8" stroke-linecap="butt"/><path d="M425.4 397 L429 401.4" stroke="#fbf0b0" stroke-width="0.9"/><circle cx="420.8" cy="392.9" r="5.7" fill="url(#glens)" stroke="#2384de" stroke-width="1.6"/><ellipse cx="419.6" cy="390.6" rx="2.8" ry="1.5" fill="#f4fbff" opacity="0.8"/></svg>
<div class="a btn" style="left:664.6px;top:386.7px;width:47px;height:20px"></div>
<span class="t" style="left:677.68px;transform-origin:50% 0;top:393.16px;font-size:7.4px;line-height:8.88px;color:#000;transform:scaleX(0.850);">A<u>y</u>uda</span>
<div class="a btn" style="left:714.5px;top:386.7px;width:47.5px;height:20px"></div>
<span class="t" style="left:730.85px;transform-origin:50% 0;top:393.16px;font-size:7.4px;line-height:8.88px;color:#000;transform:scaleX(0.850);"><u>S</u>alir</span>
</body></html>
